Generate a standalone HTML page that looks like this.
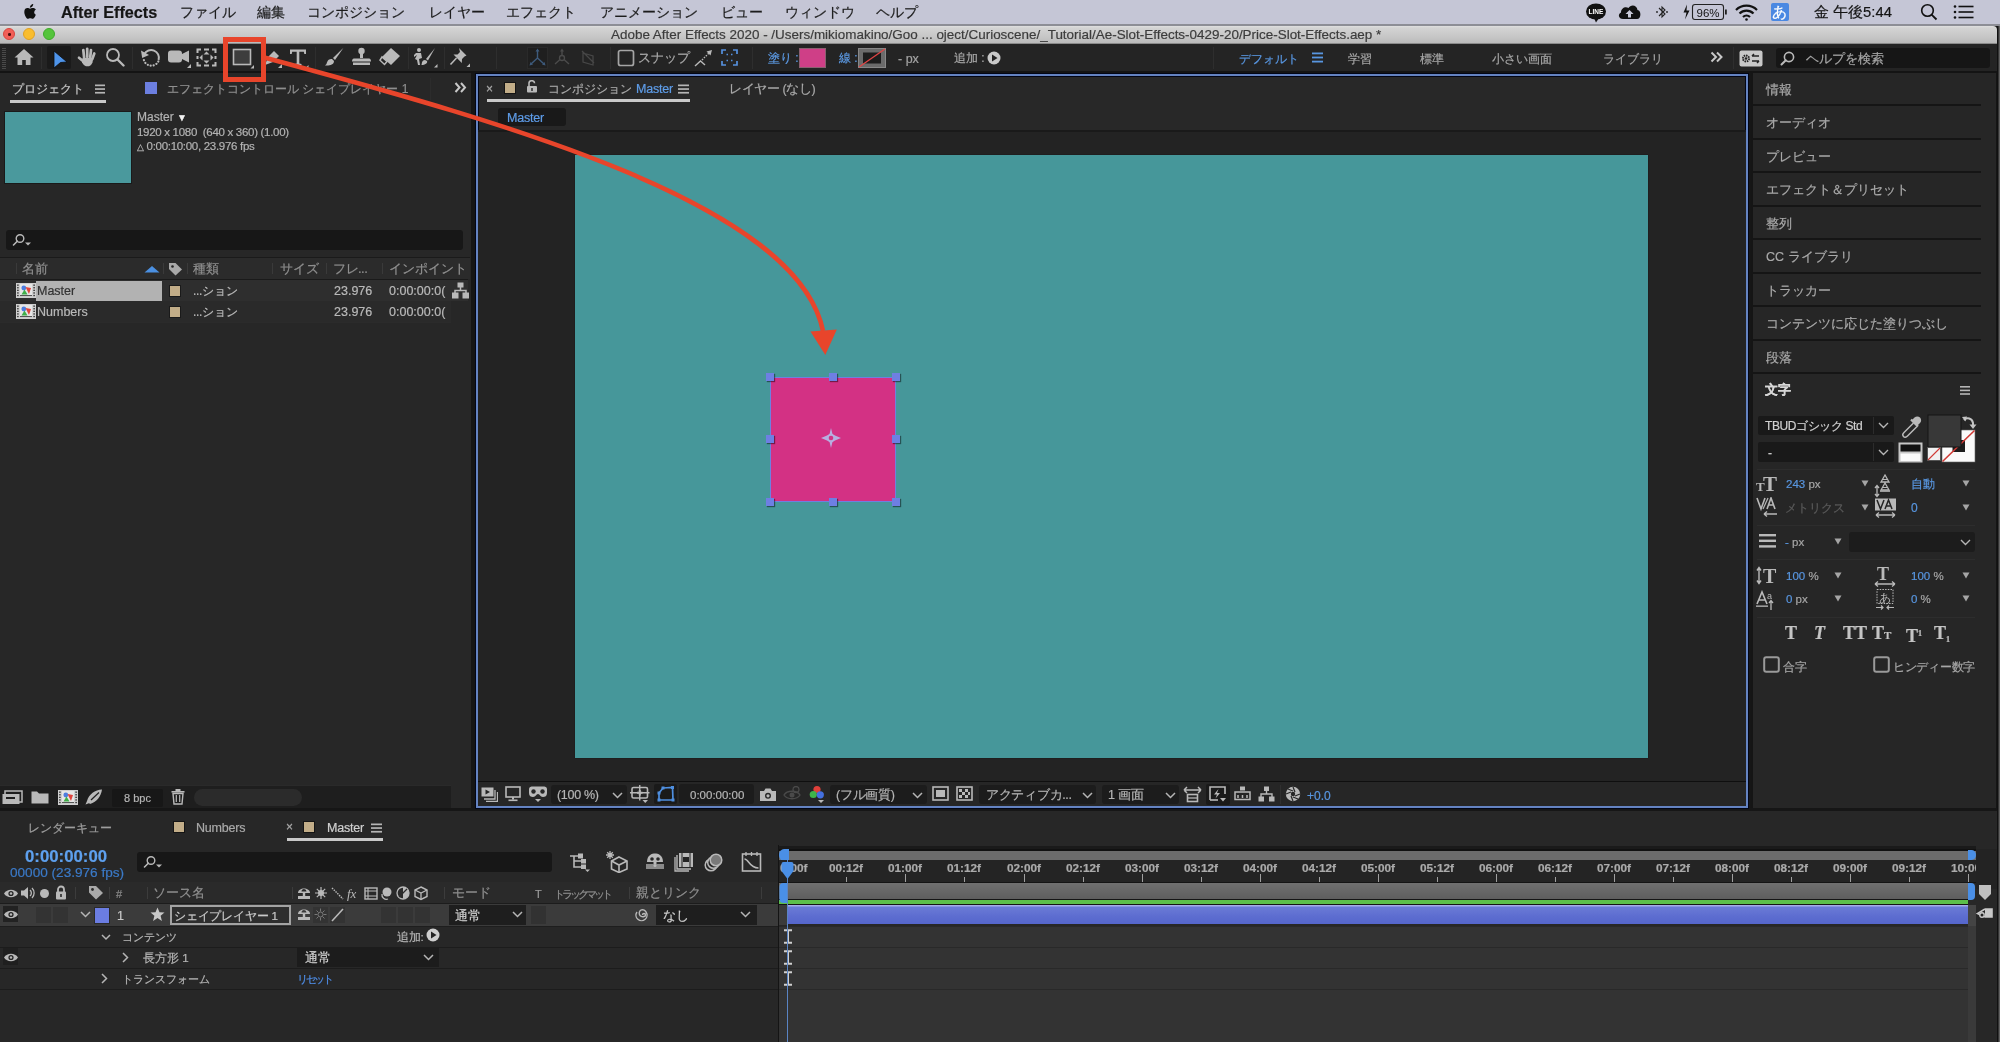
<!DOCTYPE html><html><head><meta charset="utf-8"><style>
html,body{margin:0;padding:0;width:2000px;height:1042px;overflow:hidden;background:#161616;font-family:'Liberation Sans', sans-serif;}
body{position:relative;}
div{box-sizing:border-box;-webkit-text-stroke:0.2px currentColor;}
#root{position:absolute;left:0;top:0;width:2000px;height:1042px;will-change:transform;}
</style></head><body><div id="root">
<div style="position:absolute;left:0px;top:0px;width:2000px;height:24px;background:#c5c6d6;"></div>
<div style="position:absolute;left:0px;top:24px;width:2000px;height:2px;background:#8d8e96;"></div>
<svg style="position:absolute;left:23px;top:3px;" width="16" height="18" viewBox="0 0 16 18"><path d="M11.2 9.6c0-2 1.6-2.9 1.7-3-0.9-1.4-2.4-1.6-2.9-1.6-1.2-0.1-2.4 0.7-3 0.7-0.6 0-1.6-0.7-2.6-0.7C3 5 1.3 6 1.3 8.9c0 2.9 2.2 6.9 3.6 6.9 0.7 0 1.4-0.6 2.4-0.6 1 0 1.5 0.6 2.4 0.6 1.4 0 2.8-3 3.1-4.1-1.7-0.7-1.6-2.2-1.6-2.1zM9.3 3.6c0.6-0.7 1-1.7 0.9-2.6-0.9 0-1.8 0.6-2.4 1.3-0.5 0.6-1 1.6-0.9 2.5 0.9 0.1 1.8-0.5 2.4-1.2z" fill="#111"/></svg>
<div style="position:absolute;left:61px;top:4px;font-size:16.2px;line-height:17px;color:#151515;font-weight:bold;white-space:nowrap;">After Effects</div>
<div style="position:absolute;left:180px;top:4px;font-size:14px;line-height:17px;color:#1c1c1c;font-weight:normal;white-space:nowrap;">ファイル</div>
<div style="position:absolute;left:257px;top:4px;font-size:14px;line-height:17px;color:#1c1c1c;font-weight:normal;white-space:nowrap;">編集</div>
<div style="position:absolute;left:307px;top:4px;font-size:14px;line-height:17px;color:#1c1c1c;font-weight:normal;white-space:nowrap;">コンポジション</div>
<div style="position:absolute;left:429px;top:4px;font-size:14px;line-height:17px;color:#1c1c1c;font-weight:normal;white-space:nowrap;">レイヤー</div>
<div style="position:absolute;left:506px;top:4px;font-size:14px;line-height:17px;color:#1c1c1c;font-weight:normal;white-space:nowrap;">エフェクト</div>
<div style="position:absolute;left:600px;top:4px;font-size:14px;line-height:17px;color:#1c1c1c;font-weight:normal;white-space:nowrap;">アニメーション</div>
<div style="position:absolute;left:721px;top:4px;font-size:14px;line-height:17px;color:#1c1c1c;font-weight:normal;white-space:nowrap;">ビュー</div>
<div style="position:absolute;left:785px;top:4px;font-size:14px;line-height:17px;color:#1c1c1c;font-weight:normal;white-space:nowrap;">ウィンドウ</div>
<div style="position:absolute;left:876px;top:4px;font-size:14px;line-height:17px;color:#1c1c1c;font-weight:normal;white-space:nowrap;">ヘルプ</div>
<svg style="position:absolute;left:1585px;top:3px;" width="23" height="20" viewBox="0 0 23 20"><ellipse cx="11" cy="8.5" rx="10" ry="8" fill="#111"/><path d="M9 15 L11 19.5 L14 15Z" fill="#111"/><text x="11" y="11" font-size="6.5" font-weight="bold" fill="#fff" text-anchor="middle" font-family="Liberation Sans">LINE</text></svg>
<svg style="position:absolute;left:1617px;top:3px;" width="25" height="18" viewBox="0 0 25 18"><path d="M6 16 C1.5 16 0.5 11 4 9.5 C4 5 8.5 3 11.5 5 C13.5 1 20 1.5 20.5 7 C24.5 7.5 24.5 16 20 16Z" fill="#111"/><path d="M12.5 7 L8.5 11 H11 V14.5 H14 V11 H16.5Z" fill="#c8c9d7"/></svg>
<svg style="position:absolute;left:1655px;top:4px;" width="14" height="16" viewBox="0 0 14 16"><path d="M4 4 L10 10 L7 13 V3 L10 6 L4 12" stroke="#222" stroke-width="1.1" fill="none"/><circle cx="2" cy="8" r="0.9" fill="#222"/><circle cx="12" cy="8" r="0.9" fill="#222"/></svg>
<svg style="position:absolute;left:1682px;top:3px;" width="46" height="18" viewBox="0 0 46 18"><path d="M5 1.5 L1.5 9.5 H4.5 L3 16.5 L7.5 7.5 H4.5Z" fill="#111"/><rect x="10.5" y="1.5" width="31" height="15" rx="2.5" fill="none" stroke="#222" stroke-width="1.1"/><rect x="43" y="6.5" width="1.8" height="5" fill="#222"/><text x="26" y="13.5" font-size="11.5" fill="#111" text-anchor="middle" font-family="Liberation Sans">96%</text></svg>
<svg style="position:absolute;left:1734px;top:3px;" width="25" height="18" viewBox="0 0 25 18"><path d="M2 7 A15 15 0 0 1 23 7" stroke="#111" stroke-width="2.2" fill="none"/><path d="M5.5 10.5 A10 10 0 0 1 19.5 10.5" stroke="#111" stroke-width="2.2" fill="none"/><path d="M9 14 A5 5 0 0 1 16 14" stroke="#111" stroke-width="2.2" fill="none"/><circle cx="12.5" cy="16.5" r="1.3" fill="#111"/></svg>
<div style="position:absolute;left:1771px;top:3px;width:18px;height:18px;background:#4a88e2;border-radius:2px;"></div>
<div style="position:absolute;left:1772px;top:4px;font-size:15px;line-height:16px;color:#fff;font-weight:normal;white-space:nowrap;">あ</div>
<div style="position:absolute;left:1814px;top:4px;font-size:14.8px;line-height:17px;color:#151515;font-weight:normal;white-space:nowrap;">金 午後5:44</div>
<svg style="position:absolute;left:1920px;top:3px;" width="19" height="18" viewBox="0 0 19 18"><circle cx="7.5" cy="7.5" r="5.8" stroke="#111" stroke-width="1.6" fill="none"/><path d="M11.6 11.6 L16.5 16.5" stroke="#111" stroke-width="1.8"/></svg>
<svg style="position:absolute;left:1953px;top:4px;" width="22" height="16" viewBox="0 0 22 16"><circle cx="2" cy="2.5" r="1.3" fill="#111"/><circle cx="2" cy="8" r="1.3" fill="#111"/><circle cx="2" cy="13.5" r="1.3" fill="#111"/><rect x="5.5" y="1.7" width="15" height="1.6" fill="#111"/><rect x="5.5" y="7.2" width="15" height="1.6" fill="#111"/><rect x="5.5" y="12.7" width="15" height="1.6" fill="#111"/></svg>
<div style="position:absolute;left:1997px;top:26px;width:3px;height:1016px;background:linear-gradient(90deg,#111 0,#111 1px,#5a5a5a 2px,#6a6a6a);"></div>
<div style="position:absolute;left:0px;top:26px;width:1997px;height:18px;background:linear-gradient(#e0e0e0 0,#d3d3d3 2px,#c6c6c6 60%,#b9b9b9);border-top-right-radius:4px;"></div>
<div style="position:absolute;left:0px;top:43px;width:1997px;height:1px;background:#8a8a8a;"></div>
<div style="position:absolute;left:3px;top:28px;width:12px;height:12px;background:#f25f57;border-radius:50%;border:0.5px solid #d8463f;"></div>
<div style="position:absolute;left:23px;top:28px;width:12px;height:12px;background:#f9bd2f;border-radius:50%;border:0.5px solid #dfa023;"></div>
<div style="position:absolute;left:43px;top:28px;width:12px;height:12px;background:#55c43c;border-radius:50%;border:0.5px solid #3eaa2a;"></div>
<div style="position:absolute;left:8px;top:33px;width:2.5px;height:2.5px;background:#4a0f0c;border-radius:50%;"></div>
<div style="position:absolute;left:611px;top:27px;font-size:13.45px;line-height:15px;color:#3c3c3c;font-weight:normal;white-space:nowrap;">Adobe After Effects 2020 - /Users/mikiomakino/Goo ... oject/Curioscene/_Tutorial/Ae-Slot-Effects-0429-20/Price-Slot-Effects.aep *</div>
<div style="position:absolute;left:0px;top:44px;width:1997px;height:28px;background:#242424;"></div>
<div style="position:absolute;left:0px;top:71px;width:1997px;height:2px;background:#141414;"></div>
<div style="position:absolute;left:2px;top:48px;width:4px;height:1px;background:#4a4a4a;"></div>
<div style="position:absolute;left:2px;top:50px;width:4px;height:1px;background:#4a4a4a;"></div>
<div style="position:absolute;left:2px;top:52px;width:4px;height:1px;background:#4a4a4a;"></div>
<div style="position:absolute;left:2px;top:54px;width:4px;height:1px;background:#4a4a4a;"></div>
<div style="position:absolute;left:2px;top:56px;width:4px;height:1px;background:#4a4a4a;"></div>
<div style="position:absolute;left:2px;top:58px;width:4px;height:1px;background:#4a4a4a;"></div>
<div style="position:absolute;left:2px;top:60px;width:4px;height:1px;background:#4a4a4a;"></div>
<div style="position:absolute;left:2px;top:62px;width:4px;height:1px;background:#4a4a4a;"></div>
<div style="position:absolute;left:2px;top:64px;width:4px;height:1px;background:#4a4a4a;"></div>
<div style="position:absolute;left:2px;top:66px;width:4px;height:1px;background:#4a4a4a;"></div>
<div style="position:absolute;left:2px;top:68px;width:4px;height:1px;background:#4a4a4a;"></div>
<div style="position:absolute;left:41px;top:47px;width:1px;height:22px;background:#2e2e2e;"></div>
<div style="position:absolute;left:132px;top:47px;width:1px;height:22px;background:#2e2e2e;"></div>
<div style="position:absolute;left:315px;top:47px;width:1px;height:22px;background:#2e2e2e;"></div>
<div style="position:absolute;left:408px;top:47px;width:1px;height:22px;background:#2e2e2e;"></div>
<div style="position:absolute;left:444px;top:47px;width:1px;height:22px;background:#2e2e2e;"></div>
<div style="position:absolute;left:496px;top:47px;width:1px;height:22px;background:#2e2e2e;"></div>
<div style="position:absolute;left:610px;top:47px;width:1px;height:22px;background:#2e2e2e;"></div>
<div style="position:absolute;left:752px;top:47px;width:1px;height:22px;background:#2e2e2e;"></div>
<div style="position:absolute;left:1213px;top:47px;width:1px;height:22px;background:#2e2e2e;"></div>
<div style="position:absolute;left:1733px;top:47px;width:1px;height:22px;background:#2e2e2e;"></div>
<svg style="position:absolute;left:14px;top:48px;" width="20" height="18" viewBox="0 0 20 18"><path d="M10 1 L19.5 9.5 H16.5 V17 H11.8 V12 H8.2 V17 H3.5 V9.5 H0.5Z" fill="#b9b9b9"/></svg>
<div style="position:absolute;left:47px;top:46px;width:24px;height:23px;background:#1a1a1a;border-radius:2px;"></div>
<svg style="position:absolute;left:53px;top:50px;" width="15" height="19" viewBox="0 0 15 19"><path d="M1 1 L14 12 L7.5 12.5 L1 18Z" fill="#4e94ea" stroke="#0d0d0d" stroke-width="0.8"/></svg>
<svg style="position:absolute;left:77px;top:47px;" width="20" height="20" viewBox="0 0 20 20"><g stroke="#b9b9b9" stroke-width="2.7" stroke-linecap="round"><path d="M7.2 11 L6.3 3"/><path d="M10.3 10 L10.2 1.8"/><path d="M13.2 10.5 L14 3"/><path d="M15.3 12 L17.3 6.5"/><path d="M6.5 14.5 L2 10.8"/></g><path d="M5.5 11 H16.2 L15.5 15.5 C14.5 18.5 12.5 19.3 10.5 19.3 C8.5 19.3 6.5 18.5 5 15.5 Z" fill="#b9b9b9"/></svg>
<svg style="position:absolute;left:105px;top:47px;" width="20" height="20" viewBox="0 0 20 20"><circle cx="8" cy="8" r="6" stroke="#b9b9b9" stroke-width="1.8" fill="none"/><path d="M12.5 12.5 L18.5 18.5" stroke="#b9b9b9" stroke-width="2.4" stroke-linecap="round"/></svg>
<svg style="position:absolute;left:140px;top:47px;" width="21" height="20" viewBox="0 0 21 20"><path d="M4.2 7.2 A7.8 7.8 0 0 1 18.6 13" stroke="#b9b9b9" stroke-width="2" fill="none"/><path d="M18.3 14.5 A7.8 7.8 0 0 1 3.6 11.5" stroke="#b9b9b9" stroke-width="2.2" fill="none" stroke-dasharray="0.1 2.9" stroke-linecap="round"/><path d="M1 3.5 L2.2 11 L9 8Z" fill="#b9b9b9"/></svg>
<svg style="position:absolute;left:167px;top:49px;" width="25" height="20" viewBox="0 0 25 20"><rect x="1" y="1.5" width="14" height="12" rx="3" fill="#b9b9b9"/><path d="M15 5 L22 1.5 V13.5 L15 10Z" fill="#b9b9b9"/><path d="M20 19 L24 15 V19Z" fill="#b9b9b9"/></svg>
<svg style="position:absolute;left:196px;top:48px;" width="21" height="19" viewBox="0 0 21 19"><path d="M1.5 5 V1.5 H5 M16 1.5 H19.5 V5 M19.5 14 V17.5 H16 M5 17.5 H1.5 V14" stroke="#b9b9b9" stroke-width="2" fill="none"/><path d="M8 1.5 H13 M8 17.5 H13 M1.5 8 V11 M19.5 8 V11" stroke="#b9b9b9" stroke-width="2"/><path d="M10.5 3.5 L7.5 6.5 H13.5Z M10.5 15.5 L7.5 12.5 H13.5Z M3.5 9.5 L6.5 6.5 V12.5Z M17.5 9.5 L14.5 6.5 V12.5Z" fill="#b9b9b9"/></svg>
<svg style="position:absolute;left:232px;top:48px;" width="23" height="21" viewBox="0 0 23 21"><rect x="1.5" y="1.5" width="17" height="15" fill="#3d3d3d" stroke="#b9b9b9" stroke-width="1.6"/><path d="M22 17 L22 20.5 L18.5 20.5Z" fill="#b9b9b9"/></svg>
<svg style="position:absolute;left:263px;top:48px;" width="20" height="20" viewBox="0 0 20 20"><path d="M2 17 L5 9 L11 3 L16 8 L10 14Z" fill="#b9b9b9"/><path d="M15 20 L19 16 V20Z" fill="#b9b9b9"/></svg>
<svg style="position:absolute;left:289px;top:48px;" width="20" height="20" viewBox="0 0 20 20"><path d="M1 1.5 H17 V6 H15.3 L14.8 3.8 H10.3 V15.5 L12.5 16 V17.5 H5.5 V16 L7.7 15.5 V3.8 H3.2 L2.7 6 H1Z" fill="#b9b9b9"/><path d="M17 19.5 L19.5 17 V19.5Z" fill="#b9b9b9"/></svg>
<svg style="position:absolute;left:324px;top:47px;" width="21" height="20" viewBox="0 0 21 20"><path d="M19.5 0.8 L9 11 L11 13 Z" fill="#b9b9b9"/><path d="M8 12 C4 11.5 3 15 2.5 17 L1 18.5 C5 19 10 18 10 14Z" fill="#b9b9b9"/></svg>
<svg style="position:absolute;left:351px;top:47px;" width="21" height="20" viewBox="0 0 21 20"><circle cx="10.5" cy="4" r="3.2" fill="#b9b9b9"/><rect x="9" y="6" width="3" height="5" fill="#b9b9b9"/><path d="M3 11.5 H18 C19.5 11.5 20 13 20 14.5 H1 C1 13 1.5 11.5 3 11.5Z" fill="#b9b9b9"/><rect x="2" y="15.5" width="17" height="2.5" fill="#b9b9b9"/></svg>
<svg style="position:absolute;left:379px;top:47px;" width="22" height="20" viewBox="0 0 22 20"><path d="M12 1 L21 9 L12 18 L3 10 Z" fill="#b9b9b9"/><path d="M3 10 L8 14.5 L5.5 17.5 L1 13.2Z" fill="none" stroke="#b9b9b9" stroke-width="1.5"/></svg>
<svg style="position:absolute;left:413px;top:47px;" width="26" height="22" viewBox="0 0 26 22"><circle cx="6" cy="3" r="2" fill="#b9b9b9"/><path d="M3 6 H8 L9 11 L6 12 L7 18 H5 L4 13 L2 12 L4 8 L1 10 V8Z" fill="#b9b9b9"/><path d="M22 1 L13 12 L15 13.5Z" fill="#b9b9b9"/><path d="M12 13 C9 13 9 16 8.5 18 C12 18 15 16 14 14Z" fill="#b9b9b9"/><path d="M21 20.5 L24.5 17 V20.5Z" fill="#b9b9b9"/></svg>
<svg style="position:absolute;left:449px;top:47px;" width="22" height="22" viewBox="0 0 22 22"><path d="M10 1 L17.5 8.5 L15.5 9.5 L13 12 L12.8 16 L4.5 7.5 L8.5 7.5 L11 5 Z" fill="#b9b9b9"/><path d="M7.5 11 L1.5 17.5" stroke="#b9b9b9" stroke-width="1.6"/><path d="M17.5 20 L21 16.5 V20Z" fill="#b9b9b9"/></svg>
<div style="position:absolute;left:527px;top:47px;width:21px;height:22px;background:#1f1f1f;border:1px solid #2a2a2a;"></div>
<svg style="position:absolute;left:528px;top:48px;" width="19" height="20" viewBox="0 0 19 20"><path d="M9.5 2 V10 L3 16 M9.5 10 L16 16" stroke="#3e5b7c" stroke-width="1.4" fill="none"/><path d="M9.5 0.5 L7.5 3.5 H11.5Z M1.5 17.5 L2.5 14 L5 16.5Z M17.5 17.5 L14 16.5 L16.5 14Z" fill="#3e5b7c"/></svg>
<svg style="position:absolute;left:553px;top:48px;" width="18" height="20" viewBox="0 0 18 20"><circle cx="9" cy="10" r="2.5" stroke="#4b4b4b" stroke-width="1.3" fill="none"/><path d="M9 2 V7.5 M7 11.5 L2 16 M11 11.5 L16 16" stroke="#4b4b4b" stroke-width="1.4"/><path d="M9 0.5 L7 3.5 H11Z" fill="#4b4b4b"/></svg>
<svg style="position:absolute;left:579px;top:48px;" width="18" height="20" viewBox="0 0 18 20"><path d="M3 3 L15 15 M4 5 L4 14 L14 17 V8 Z" stroke="#474747" stroke-width="1.3" fill="none"/></svg>
<svg style="position:absolute;left:617px;top:49px;" width="18" height="18" viewBox="0 0 18 18"><rect x="1.5" y="1.5" width="15" height="15" rx="2" fill="none" stroke="#a5a5a5" stroke-width="1.7"/></svg>
<div style="position:absolute;left:638px;top:51px;font-size:12.5px;line-height:14px;color:#a9a9a9;font-weight:normal;white-space:nowrap;">スナップ</div>
<svg style="position:absolute;left:694px;top:49px;" width="19" height="19" viewBox="0 0 19 19"><path d="M1 17 L6.5 12 L11 16" stroke="#b9b9b9" stroke-width="1.4" fill="none"/><path d="M8 11 L17 2" stroke="#b9b9b9" stroke-width="1.4" stroke-dasharray="1.5 1.2"/><path d="M18 1 L12.5 2.5 L16.5 6.5Z" fill="#b9b9b9"/></svg>
<svg style="position:absolute;left:721px;top:49px;" width="17" height="17" viewBox="0 0 17 17"><path d="M1 5 V1 H5 M12 1 H16 V5 M16 12 V16 H12 M5 16 H1 V12" stroke="#5590dd" stroke-width="1.7" fill="none"/><path d="M5.5 5.5 h1.5 M10 5.5 h1.5 M5.5 11.5 h1.5 M10 11.5 h1.5" stroke="#5590dd" stroke-width="1.5"/></svg>
<div style="position:absolute;left:768px;top:51px;font-size:12px;line-height:14px;color:#5c9ae4;font-weight:normal;white-space:nowrap;">塗り :</div>
<div style="position:absolute;left:799px;top:48px;width:27px;height:20px;background:#cf3f87;border:1px solid #8a6070;"></div>
<div style="position:absolute;left:839px;top:51px;font-size:12px;line-height:14px;color:#5c9ae4;font-weight:normal;white-space:nowrap;">線 :</div>
<svg style="position:absolute;left:858px;top:48px;" width="28" height="20" viewBox="0 0 28 20"><rect x="0.5" y="0.5" width="27" height="19" fill="#6b6b6b" stroke="#888"/><rect x="5" y="4.5" width="18" height="11" fill="#1d1d1d"/><path d="M1 19 L27 1" stroke="#e04545" stroke-width="1.3"/></svg>
<div style="position:absolute;left:898px;top:52px;font-size:12.5px;line-height:14px;color:#a3a3a3;font-weight:normal;white-space:nowrap;">- px</div>
<div style="position:absolute;left:954px;top:51px;font-size:12px;line-height:14px;color:#a9a9a9;font-weight:normal;white-space:nowrap;">追加 :</div>
<svg style="position:absolute;left:987px;top:51px;" width="14" height="14" viewBox="0 0 14 14"><circle cx="7" cy="7" r="6.5" fill="#c9c9c9"/><path d="M5 3.5 L10.5 7 L5 10.5Z" fill="#222"/></svg>
<div style="position:absolute;left:1239px;top:52px;font-size:12px;line-height:14px;color:#5896e0;font-weight:normal;white-space:nowrap;">デフォルト</div>
<svg style="position:absolute;left:1312px;top:52px;" width="12" height="11" viewBox="0 0 12 11"><rect x="0" y="0.5" width="11" height="1.8" fill="#5896e0"/><rect x="0" y="4.6" width="11" height="1.8" fill="#5896e0"/><rect x="0" y="8.7" width="11" height="1.8" fill="#5896e0"/></svg>
<div style="position:absolute;left:1348px;top:52px;font-size:12px;line-height:14px;color:#a6a6a6;font-weight:normal;white-space:nowrap;">学習</div>
<div style="position:absolute;left:1420px;top:52px;font-size:12px;line-height:14px;color:#a6a6a6;font-weight:normal;white-space:nowrap;">標準</div>
<div style="position:absolute;left:1492px;top:52px;font-size:12px;line-height:14px;color:#a6a6a6;font-weight:normal;white-space:nowrap;">小さい画面</div>
<div style="position:absolute;left:1603px;top:52px;font-size:12px;line-height:14px;color:#a6a6a6;font-weight:normal;white-space:nowrap;">ライブラリ</div>
<svg style="position:absolute;left:1710px;top:51px;" width="14" height="12" viewBox="0 0 14 12"><path d="M1.5 1.5 L6 6 L1.5 10.5 M7 1.5 L11.5 6 L7 10.5" stroke="#c8c8c8" stroke-width="2" fill="none"/></svg>
<svg style="position:absolute;left:1739px;top:50px;" width="24" height="17" viewBox="0 0 24 17"><rect x="0.5" y="0.5" width="23" height="16" rx="2" fill="#c8c8c8"/><circle cx="7" cy="8.5" r="3" fill="none" stroke="#222" stroke-width="2" stroke-dasharray="1.5 0.8"/><circle cx="7" cy="8.5" r="1.3" fill="#222"/><path d="M13 6 H20 M13 6 L15 4 M20 11 H13 M20 11 L18 13" stroke="#222" stroke-width="1.5" fill="none"/></svg>
<div style="position:absolute;left:1776px;top:48px;width:214px;height:20px;background:#161616;border-radius:3px;"></div>
<svg style="position:absolute;left:1780px;top:51px;" width="15" height="15" viewBox="0 0 15 15"><circle cx="9" cy="6" r="4.6" stroke="#b9b9b9" stroke-width="1.6" fill="none"/><path d="M5.8 9.2 L1.5 13.5" stroke="#b9b9b9" stroke-width="2" stroke-linecap="round"/></svg>
<div style="position:absolute;left:1806px;top:52px;font-size:12.5px;line-height:14px;color:#a6a6a6;font-weight:normal;white-space:nowrap;">ヘルプを検索</div>
<div style="position:absolute;left:0px;top:73px;width:471px;height:735px;background:#272727;"></div>
<div style="position:absolute;left:12px;top:82px;font-size:12px;line-height:14px;color:#c4c4c4;font-weight:normal;white-space:nowrap;">プロジェクト</div>
<svg style="position:absolute;left:95px;top:84px;" width="10" height="10" viewBox="0 0 10 10"><rect x="0" y="0.5" width="10" height="1.7" fill="#b5b5b5"/><rect x="0" y="4.2" width="10" height="1.7" fill="#b5b5b5"/><rect x="0" y="7.9" width="10" height="1.7" fill="#b5b5b5"/></svg>
<div style="position:absolute;left:10px;top:100px;width:96px;height:3px;background:#c9c9c9;"></div>
<div style="position:absolute;left:145px;top:82px;width:12px;height:12px;background:#6c7fe0;"></div>
<div style="position:absolute;left:167px;top:82px;font-size:12px;line-height:14px;color:#8f8f8f;font-weight:normal;white-space:nowrap;">エフェクトコントロール シェイプレイヤー 1</div>
<div style="position:absolute;left:430px;top:78px;width:1px;height:22px;background:#2c2c2c;"></div>
<svg style="position:absolute;left:454px;top:82px;" width="13" height="11" viewBox="0 0 13 11"><path d="M1.5 1 L5.5 5.5 L1.5 10 M7 1 L11 5.5 L7 10" stroke="#c8c8c8" stroke-width="2" fill="none"/></svg>
<div style="position:absolute;left:4px;top:111px;width:128px;height:73px;background:#4a999d;border:1px solid #1a1a1a;"></div>
<div style="position:absolute;left:137px;top:111px;font-size:12px;line-height:13px;color:#b3b3b3;font-weight:normal;white-space:nowrap;">Master <span style="color:#f2f2f2;font-size:10px">▼</span></div>
<div style="position:absolute;left:137px;top:126px;font-size:11.5px;line-height:13px;color:#b3b3b3;font-weight:normal;white-space:nowrap;letter-spacing:-0.3px;">1920 x 1080&nbsp; (640 x 360) (1.00)</div>
<div style="position:absolute;left:137px;top:140px;font-size:11.5px;line-height:13px;color:#b3b3b3;font-weight:normal;white-space:nowrap;letter-spacing:-0.3px;"><span style="font-size:9px">△</span> 0:00:10:00, 23.976 fps</div>
<div style="position:absolute;left:6px;top:230px;width:457px;height:20px;background:#171717;border-radius:3px;"></div>
<svg style="position:absolute;left:12px;top:233px;" width="22" height="15" viewBox="0 0 22 15"><circle cx="8" cy="5.5" r="3.8" stroke="#b9b9b9" stroke-width="1.4" fill="none"/><path d="M5.3 8.2 L1.5 12" stroke="#b9b9b9" stroke-width="1.6" stroke-linecap="round"/><path d="M13 9.5 H19 L16 12.5Z" fill="#b9b9b9"/></svg>
<div style="position:absolute;left:0px;top:257px;width:470px;height:1px;background:#1a1a1a;"></div>
<div style="position:absolute;left:0px;top:258px;width:470px;height:21px;background:#2b2b2b;"></div>
<div style="position:absolute;left:0px;top:279px;width:468px;height:1px;background:#1a1a1a;"></div>
<div style="position:absolute;left:16px;top:263px;width:1px;height:11px;background:#3a3a3a;"></div>
<div style="position:absolute;left:163px;top:263px;width:1px;height:11px;background:#3a3a3a;"></div>
<div style="position:absolute;left:187px;top:263px;width:1px;height:11px;background:#3a3a3a;"></div>
<div style="position:absolute;left:272px;top:263px;width:1px;height:11px;background:#3a3a3a;"></div>
<div style="position:absolute;left:326px;top:263px;width:1px;height:11px;background:#3a3a3a;"></div>
<div style="position:absolute;left:382px;top:263px;width:1px;height:11px;background:#3a3a3a;"></div>
<div style="position:absolute;left:22px;top:262px;font-size:13px;line-height:14px;color:#8f8f8f;font-weight:normal;white-space:nowrap;">名前</div>
<svg style="position:absolute;left:144px;top:265px;" width="16" height="8" viewBox="0 0 16 8"><path d="M0.5 7.5 L8 1 L15.5 7.5Z" fill="#4b90e2"/></svg>
<svg style="position:absolute;left:168px;top:262px;" width="15" height="14" viewBox="0 0 15 14"><path d="M1 1 H7.5 L14 7.5 L7.5 13.5 L1 7V1Z" fill="#a9a9a9"/><circle cx="4.5" cy="4.5" r="1.3" fill="#232323"/></svg>
<div style="position:absolute;left:193px;top:262px;font-size:13px;line-height:14px;color:#8f8f8f;font-weight:normal;white-space:nowrap;">種類</div>
<div style="position:absolute;left:280px;top:262px;font-size:13px;line-height:14px;color:#8f8f8f;font-weight:normal;white-space:nowrap;">サイズ</div>
<div style="position:absolute;left:333px;top:262px;font-size:13px;line-height:14px;color:#8f8f8f;font-weight:normal;white-space:nowrap;letter-spacing:-0.5px;">フレ...</div>
<div style="position:absolute;left:389px;top:262px;font-size:12.8px;line-height:14px;color:#8f8f8f;font-weight:normal;white-space:nowrap;">インポイント</div>
<div style="position:absolute;left:0px;top:280px;width:468px;height:21px;background:#2e2e2e;"></div>
<div style="position:absolute;left:0px;top:301px;width:451px;height:21px;background:#2a2a2a;"></div>
<div style="position:absolute;left:0px;top:322px;width:451px;height:1px;background:#2b2b2b;"></div>
<svg style="position:absolute;left:16px;top:283px;" width="20" height="15" viewBox="0 0 20 15"><rect x="0" y="0" width="20" height="15" fill="#cfcfcf"/><rect x="1.2" y="1.5" width="1.4" height="1.3" fill="#222"/><rect x="17.4" y="1.5" width="1.4" height="1.3" fill="#222"/><rect x="1.2" y="4.1" width="1.4" height="1.3" fill="#222"/><rect x="17.4" y="4.1" width="1.4" height="1.3" fill="#222"/><rect x="1.2" y="6.7" width="1.4" height="1.3" fill="#222"/><rect x="17.4" y="6.7" width="1.4" height="1.3" fill="#222"/><rect x="1.2" y="9.3" width="1.4" height="1.3" fill="#222"/><rect x="17.4" y="9.3" width="1.4" height="1.3" fill="#222"/><rect x="1.2" y="11.9" width="1.4" height="1.3" fill="#222"/><rect x="17.4" y="11.9" width="1.4" height="1.3" fill="#222"/><rect x="4" y="1" width="12" height="13" fill="#e6e6e6"/><rect x="4" y="12" width="12" height="1.2" fill="#555"/><circle cx="7.8" cy="5" r="2.4" fill="#4d7de0"/><path d="M5.5 11.5 L8.5 6.5 L11.5 11.5Z" fill="#3fae49"/><path d="M9.5 4 L15 5 L13 11 Z" fill="#e0443d"/></svg>
<div style="position:absolute;left:36px;top:281px;width:126px;height:20px;background:#b2b2b2;"></div>
<div style="position:absolute;left:37px;top:284px;font-size:12.5px;line-height:14px;color:#333333;font-weight:normal;white-space:nowrap;">Master</div>
<div style="position:absolute;left:169px;top:285px;width:12px;height:12px;background:#c2ad88;border:1px solid #1a1a1a;"></div>
<div style="position:absolute;left:193px;top:284px;font-size:12px;line-height:14px;color:#b9b9b9;font-weight:normal;white-space:nowrap;letter-spacing:-0.3px;">...ション</div>
<div style="position:absolute;left:334px;top:284px;font-size:12.5px;line-height:14px;color:#b9b9b9;font-weight:normal;white-space:nowrap;">23.976</div>
<div style="position:absolute;left:389px;top:284px;font-size:12.5px;line-height:14px;color:#b9b9b9;font-weight:normal;white-space:nowrap;width:63px;overflow:hidden;">0:00:00:0(</div>
<svg style="position:absolute;left:452px;top:282px;" width="17" height="17" viewBox="0 0 17 17"><rect x="5.5" y="0.5" width="6" height="5" fill="#b9b9b9"/><path d="M8.5 5 V8.5 M3 11 V8.5 H14 V11" stroke="#b9b9b9" stroke-width="1.5" fill="none"/><rect x="0" y="10.5" width="6.5" height="6" fill="#b9b9b9"/><rect x="10.5" y="10.5" width="6.5" height="6" fill="#b9b9b9"/></svg>
<svg style="position:absolute;left:16px;top:304px;" width="20" height="15" viewBox="0 0 20 15"><rect x="0" y="0" width="20" height="15" fill="#cfcfcf"/><rect x="1.2" y="1.5" width="1.4" height="1.3" fill="#222"/><rect x="17.4" y="1.5" width="1.4" height="1.3" fill="#222"/><rect x="1.2" y="4.1" width="1.4" height="1.3" fill="#222"/><rect x="17.4" y="4.1" width="1.4" height="1.3" fill="#222"/><rect x="1.2" y="6.7" width="1.4" height="1.3" fill="#222"/><rect x="17.4" y="6.7" width="1.4" height="1.3" fill="#222"/><rect x="1.2" y="9.3" width="1.4" height="1.3" fill="#222"/><rect x="17.4" y="9.3" width="1.4" height="1.3" fill="#222"/><rect x="1.2" y="11.9" width="1.4" height="1.3" fill="#222"/><rect x="17.4" y="11.9" width="1.4" height="1.3" fill="#222"/><rect x="4" y="1" width="12" height="13" fill="#e6e6e6"/><rect x="4" y="12" width="12" height="1.2" fill="#555"/><circle cx="7.8" cy="5" r="2.4" fill="#4d7de0"/><path d="M5.5 11.5 L8.5 6.5 L11.5 11.5Z" fill="#3fae49"/><path d="M9.5 4 L15 5 L13 11 Z" fill="#e0443d"/></svg>
<div style="position:absolute;left:37px;top:305px;font-size:12.5px;line-height:14px;color:#b9b9b9;font-weight:normal;white-space:nowrap;">Numbers</div>
<div style="position:absolute;left:169px;top:306px;width:12px;height:12px;background:#c2ad88;border:1px solid #1a1a1a;"></div>
<div style="position:absolute;left:193px;top:305px;font-size:12px;line-height:14px;color:#b9b9b9;font-weight:normal;white-space:nowrap;letter-spacing:-0.3px;">...ション</div>
<div style="position:absolute;left:334px;top:305px;font-size:12.5px;line-height:14px;color:#b9b9b9;font-weight:normal;white-space:nowrap;">23.976</div>
<div style="position:absolute;left:389px;top:305px;font-size:12.5px;line-height:14px;color:#b9b9b9;font-weight:normal;white-space:nowrap;width:63px;overflow:hidden;">0:00:00:0(</div>
<div style="position:absolute;left:0px;top:786px;width:451px;height:22px;background:#1e1e1e;"></div>
<div style="position:absolute;left:0px;top:785px;width:451px;height:1px;background:#2a2a2a;"></div>
<svg style="position:absolute;left:2px;top:789px;" width="21" height="16" viewBox="0 0 21 16"><rect x="3" y="2" width="17" height="11" fill="none" stroke="#b9b9b9" stroke-width="1.5"/><rect x="0.5" y="5" width="17" height="10" fill="#b9b9b9"/><rect x="4" y="8" width="9" height="2" fill="#1e1e1e"/></svg>
<svg style="position:absolute;left:31px;top:790px;" width="18" height="14" viewBox="0 0 18 14"><path d="M0.5 1.5 H6 L8 3.5 H17.5 V13.5 H0.5Z" fill="#b9b9b9"/></svg>
<svg style="position:absolute;left:58px;top:790px;" width="20" height="15" viewBox="0 0 20 15"><rect x="0" y="0" width="20" height="15" fill="#cfcfcf"/><rect x="1.2" y="1.5" width="1.4" height="1.3" fill="#222"/><rect x="17.4" y="1.5" width="1.4" height="1.3" fill="#222"/><rect x="1.2" y="4.1" width="1.4" height="1.3" fill="#222"/><rect x="17.4" y="4.1" width="1.4" height="1.3" fill="#222"/><rect x="1.2" y="6.7" width="1.4" height="1.3" fill="#222"/><rect x="17.4" y="6.7" width="1.4" height="1.3" fill="#222"/><rect x="1.2" y="9.3" width="1.4" height="1.3" fill="#222"/><rect x="17.4" y="9.3" width="1.4" height="1.3" fill="#222"/><rect x="1.2" y="11.9" width="1.4" height="1.3" fill="#222"/><rect x="17.4" y="11.9" width="1.4" height="1.3" fill="#222"/><rect x="4" y="1" width="12" height="13" fill="#e6e6e6"/><rect x="4" y="12" width="12" height="1.2" fill="#555"/><circle cx="7.8" cy="5" r="2.4" fill="#4d7de0"/><path d="M5.5 11.5 L8.5 6.5 L11.5 11.5Z" fill="#3fae49"/><path d="M9.5 4 L15 5 L13 11 Z" fill="#e0443d"/></svg>
<svg style="position:absolute;left:85px;top:789px;" width="18" height="16" viewBox="0 0 18 16"><path d="M17 0.5 C10 1 4 5 2 12 L5 15 C12 13 16 7 17 0.5Z M2 12 L0.5 15.5 L4.5 14" fill="#b9b9b9"/><path d="M6 11 L14 3.5" stroke="#1e1e1e" stroke-width="1.2"/></svg>
<div style="position:absolute;left:112px;top:789px;width:51px;height:18px;background:#171717;border-radius:2px;"></div>
<div style="position:absolute;left:124px;top:792px;font-size:11px;line-height:13px;color:#b5b5b5;font-weight:normal;white-space:nowrap;">8 bpc</div>
<svg style="position:absolute;left:171px;top:789px;" width="14" height="16" viewBox="0 0 14 16"><rect x="0.5" y="2" width="13" height="1.6" fill="#b9b9b9"/><rect x="4.5" y="0" width="5" height="2" fill="#b9b9b9"/><path d="M2 4.5 H12 L11 15 H3Z" fill="none" stroke="#b9b9b9" stroke-width="1.4"/><path d="M5.3 6 V13 M8.7 6 V13" stroke="#b9b9b9" stroke-width="1.2"/></svg>
<div style="position:absolute;left:194px;top:789px;width:108px;height:17px;background:#2b2b2b;border-radius:9px;"></div>
<div style="position:absolute;left:475px;top:73px;width:1274px;height:736px;background:#020616;"></div>
<div style="position:absolute;left:476px;top:74px;width:1272px;height:734px;background:#282828;border:2px solid #6483c2;"></div>
<div style="position:absolute;left:478px;top:76px;width:1268px;height:730px;background:transparent;border:1px solid #020616;"></div>
<div style="position:absolute;left:486px;top:83px;font-size:12px;line-height:13px;color:#a9a9a9;font-weight:normal;white-space:nowrap;">×</div>
<div style="position:absolute;left:504px;top:82px;width:12px;height:12px;background:#c2ad88;border:1px solid #141414;"></div>
<svg style="position:absolute;left:526px;top:80px;" width="12" height="13" viewBox="0 0 12 13"><path d="M3 6 V3.8 A2.8 2.8 0 0 1 8.6 3.3" stroke="#b9b9b9" stroke-width="1.6" fill="none"/><rect x="1" y="6" width="10" height="6.5" rx="1" fill="#b9b9b9"/><rect x="5.3" y="8" width="1.4" height="3" fill="#232323"/></svg>
<div style="position:absolute;left:548px;top:82px;font-size:12px;line-height:14px;color:#a9a9a9;font-weight:normal;white-space:nowrap;">コンポジション</div>
<div style="position:absolute;left:636px;top:82px;font-size:12.5px;line-height:14px;color:#5e9ce8;font-weight:normal;white-space:nowrap;letter-spacing:-0.2px;">Master</div>
<svg style="position:absolute;left:678px;top:84px;" width="11" height="10" viewBox="0 0 11 10"><rect x="0" y="0.5" width="11" height="1.7" fill="#b5b5b5"/><rect x="0" y="4.2" width="11" height="1.7" fill="#b5b5b5"/><rect x="0" y="7.9" width="11" height="1.7" fill="#b5b5b5"/></svg>
<div style="position:absolute;left:487px;top:99px;width:203px;height:3px;background:#c9c9c9;"></div>
<div style="position:absolute;left:729px;top:82px;font-size:12.5px;line-height:14px;color:#a9a9a9;font-weight:normal;white-space:nowrap;letter-spacing:-0.4px;">レイヤー (なし)</div>
<div style="position:absolute;left:498px;top:108px;width:68px;height:18px;background:#191919;border-radius:3px;"></div>
<div style="position:absolute;left:507px;top:111px;font-size:12.5px;line-height:14px;color:#5e9ce8;font-weight:normal;white-space:nowrap;letter-spacing:-0.2px;">Master</div>
<div style="position:absolute;left:478px;top:130px;width:1268px;height:2px;background:#1a1a1a;"></div>
<div style="position:absolute;left:478px;top:132px;width:1268px;height:650px;background:#232323;"></div>
<div style="position:absolute;left:575px;top:155px;width:1073px;height:603px;background:#46979a;box-shadow:0 0 1px #111;"></div>
<div style="position:absolute;left:770px;top:377px;width:126px;height:125px;background:#d33184;border:1px solid #6f7fe0;"></div>
<div style="position:absolute;left:766px;top:373px;width:8px;height:8px;background:#6e7fe3;box-shadow:1px 1px 1px rgba(0,0,0,0.45);"></div>
<div style="position:absolute;left:766px;top:435px;width:8px;height:8px;background:#6e7fe3;box-shadow:1px 1px 1px rgba(0,0,0,0.45);"></div>
<div style="position:absolute;left:766px;top:498px;width:8px;height:8px;background:#6e7fe3;box-shadow:1px 1px 1px rgba(0,0,0,0.45);"></div>
<div style="position:absolute;left:829px;top:373px;width:8px;height:8px;background:#6e7fe3;box-shadow:1px 1px 1px rgba(0,0,0,0.45);"></div>
<div style="position:absolute;left:829px;top:498px;width:8px;height:8px;background:#6e7fe3;box-shadow:1px 1px 1px rgba(0,0,0,0.45);"></div>
<div style="position:absolute;left:892px;top:373px;width:8px;height:8px;background:#6e7fe3;box-shadow:1px 1px 1px rgba(0,0,0,0.45);"></div>
<div style="position:absolute;left:892px;top:435px;width:8px;height:8px;background:#6e7fe3;box-shadow:1px 1px 1px rgba(0,0,0,0.45);"></div>
<div style="position:absolute;left:892px;top:498px;width:8px;height:8px;background:#6e7fe3;box-shadow:1px 1px 1px rgba(0,0,0,0.45);"></div>
<svg style="position:absolute;left:819px;top:426px;" width="24" height="24" viewBox="0 0 24 24"><path d="M12 2 L13.6 8.5 L22 12 L13.6 15.5 L12 22 L10.4 15.5 L2 12 L10.4 8.5Z" fill="#b7aee0"/><circle cx="12" cy="12" r="4.2" fill="#b7aee0"/><circle cx="12" cy="12" r="2.3" fill="#d33184"/></svg>
<div style="position:absolute;left:478px;top:781px;width:1268px;height:1px;background:#0f0f0f;"></div>
<div style="position:absolute;left:478px;top:782px;width:1268px;height:24px;background:#262626;"></div>
<svg style="position:absolute;left:481px;top:787px;" width="17" height="15" viewBox="0 0 17 15"><rect x="0.5" y="0.5" width="12" height="9" fill="#b9b9b9"/><path d="M4.5 2.5 L9 5 L4.5 7.5Z" fill="#262626"/><path d="M14 3 V12 H3 M16.5 5 V14.5 H5" stroke="#b9b9b9" stroke-width="1.3" fill="none"/></svg>
<svg style="position:absolute;left:505px;top:786px;" width="16" height="16" viewBox="0 0 16 16"><rect x="1" y="1" width="14" height="10" fill="none" stroke="#b9b9b9" stroke-width="1.6"/><rect x="7" y="11" width="2" height="2.5" fill="#b9b9b9"/><rect x="3.5" y="13.5" width="9" height="1.6" fill="#b9b9b9"/></svg>
<svg style="position:absolute;left:528px;top:786px;" width="20" height="17" viewBox="0 0 20 17"><path d="M1 3 C1 0.8 3 0.5 5 0.5 H15 C17 0.5 19 0.8 19 3 V7 C19 10 17 11 15 11 C12 11 12 8 10 8 C8 8 8 11 5 11 C3 11 1 10 1 7Z" fill="#b9b9b9"/><circle cx="5.5" cy="5.5" r="2.2" fill="#262626"/><circle cx="14.5" cy="5.5" r="2.2" fill="#262626"/><path d="M7 13 H13 L10 16Z" fill="#b9b9b9"/></svg>
<div style="position:absolute;left:551px;top:785px;width:76px;height:19px;background:#1c1c1c;border-radius:3px;"></div>
<div style="position:absolute;left:557px;top:788px;font-size:12.5px;line-height:14px;color:#b5b5b5;font-weight:normal;white-space:nowrap;letter-spacing:-0.3px;">(100 %)</div>
<svg style="position:absolute;left:612px;top:792px;" width="11" height="7" viewBox="0 0 11 7"><path d="M1 1 L5.5 5.5 L10 1" stroke="#b5b5b5" stroke-width="1.5" fill="none"/></svg>
<svg style="position:absolute;left:630px;top:785px;" width="20" height="19" viewBox="0 0 20 19"><rect x="2" y="2.5" width="15.5" height="10.5" rx="1.5" fill="none" stroke="#b9b9b9" stroke-width="1.6"/><path d="M9.75 0 V15.5 M0 7.75 H19.5" stroke="#b9b9b9" stroke-width="1.4"/><path d="M7 7.75 H12.5 M9.75 5 V10.5" stroke="#b9b9b9" stroke-width="2"/><path d="M12.5 15 H18 L15.25 18Z" fill="#b9b9b9"/></svg>
<div style="position:absolute;left:654px;top:784px;width:23px;height:20px;background:#1a1a1a;border-radius:2px;"></div>
<svg style="position:absolute;left:657px;top:786px;" width="18" height="16" viewBox="0 0 18 16"><path d="M6 2 L15.5 1.5 L16 14 L2 14 L2 7Z" fill="none" stroke="#4f8fe0" stroke-width="1.7"/><rect x="4.5" y="0.5" width="3" height="3" fill="#4f8fe0"/><rect x="14" y="0" width="3" height="3" fill="#4f8fe0"/><rect x="14.5" y="12.5" width="3" height="3" fill="#4f8fe0"/><rect x="0.5" y="12.5" width="3" height="3" fill="#4f8fe0"/><rect x="0.5" y="5.5" width="3" height="3" fill="#4f8fe0"/></svg>
<div style="position:absolute;left:679px;top:784px;width:75px;height:20px;background:#1c1c1c;border-radius:3px;"></div>
<div style="position:absolute;left:690px;top:789px;font-size:11.5px;line-height:13px;color:#b5b5b5;font-weight:normal;white-space:nowrap;">0:00:00:00</div>
<svg style="position:absolute;left:759px;top:787px;" width="18" height="15" viewBox="0 0 18 15"><path d="M1 4 H5 L6.5 1.5 H11.5 L13 4 H17 V14 H1Z" fill="#b9b9b9"/><circle cx="9" cy="8.8" r="3" fill="#262626"/><circle cx="9" cy="8.8" r="1.6" fill="#b9b9b9"/></svg>
<svg style="position:absolute;left:783px;top:786px;" width="19" height="16" viewBox="0 0 19 16"><path d="M1 9 C4 4 14 4 17 9 C14 14 4 14 1 9Z" fill="none" stroke="#4a4a4a" stroke-width="1.4"/><circle cx="9" cy="9" r="2.5" fill="#4a4a4a"/><circle cx="13" cy="3.5" r="3" fill="none" stroke="#4a4a4a" stroke-width="1.3"/></svg>
<svg style="position:absolute;left:809px;top:785px;" width="16" height="19" viewBox="0 0 16 19"><circle cx="8" cy="4.5" r="3.6" fill="#e0403a"/><circle cx="4.3" cy="9.5" r="3.6" fill="#3fb54a"/><circle cx="11.3" cy="9.8" r="3.6" fill="#4470e0"/><path d="M9 15 H15 L12 18Z" fill="#b9b9b9"/></svg>
<div style="position:absolute;left:830px;top:785px;width:97px;height:19px;background:#1c1c1c;border-radius:3px;"></div>
<div style="position:absolute;left:836px;top:788px;font-size:12.5px;line-height:14px;color:#b5b5b5;font-weight:normal;white-space:nowrap;letter-spacing:-0.3px;">(フル画質)</div>
<svg style="position:absolute;left:912px;top:792px;" width="11" height="7" viewBox="0 0 11 7"><path d="M1 1 L5.5 5.5 L10 1" stroke="#b5b5b5" stroke-width="1.5" fill="none"/></svg>
<svg style="position:absolute;left:932px;top:786px;" width="17" height="16" viewBox="0 0 17 16"><rect x="1" y="1" width="15" height="13" fill="none" stroke="#b9b9b9" stroke-width="1.6"/><rect x="4" y="4" width="9" height="7" fill="#b9b9b9"/></svg>
<svg style="position:absolute;left:956px;top:786px;" width="17" height="16" viewBox="0 0 17 16"><rect x="1" y="1" width="15" height="13" fill="none" stroke="#b9b9b9" stroke-width="1.6"/><path d="M3 3 h3 v3 h-3z M9 3 h3 v3 h-3z M6 6 h3 v3 h-3z M12 6 h2 v3 h-2z M3 9 h3 v3 h-3z M9 9 h3 v3 h-3z" fill="#b9b9b9"/></svg>
<div style="position:absolute;left:979px;top:785px;width:117px;height:19px;background:#1c1c1c;border-radius:3px;"></div>
<div style="position:absolute;left:986px;top:788px;font-size:12.5px;line-height:14px;color:#b5b5b5;font-weight:normal;white-space:nowrap;letter-spacing:-0.3px;">アクティブカ...</div>
<svg style="position:absolute;left:1082px;top:792px;" width="11" height="7" viewBox="0 0 11 7"><path d="M1 1 L5.5 5.5 L10 1" stroke="#b5b5b5" stroke-width="1.5" fill="none"/></svg>
<div style="position:absolute;left:1102px;top:785px;width:77px;height:19px;background:#1c1c1c;border-radius:3px;"></div>
<div style="position:absolute;left:1108px;top:788px;font-size:12.5px;line-height:14px;color:#b5b5b5;font-weight:normal;white-space:nowrap;letter-spacing:-0.3px;">1 画面</div>
<svg style="position:absolute;left:1165px;top:792px;" width="11" height="7" viewBox="0 0 11 7"><path d="M1 1 L5.5 5.5 L10 1" stroke="#b5b5b5" stroke-width="1.5" fill="none"/></svg>
<svg style="position:absolute;left:1183px;top:786px;" width="19" height="17" viewBox="0 0 19 17"><path d="M1 4 H18 M1 4 L4 1 M1 4 L4 7 M18 4 L15 1 M18 4 L15 7" stroke="#b9b9b9" stroke-width="1.5" fill="none"/><rect x="4.5" y="8.5" width="10" height="7" fill="none" stroke="#b9b9b9" stroke-width="1.6"/><path d="M4.5 12 H14.5" stroke="#b9b9b9" stroke-width="1.3"/></svg>
<div style="position:absolute;left:1206px;top:784px;width:24px;height:21px;background:#1a1a1a;border-radius:2px;"></div>
<svg style="position:absolute;left:1209px;top:786px;" width="18" height="17" viewBox="0 0 18 17"><path d="M1 14 V1 H16 V8" stroke="#b9b9b9" stroke-width="1.6" fill="none"/><path d="M1 14 H9" stroke="#b9b9b9" stroke-width="1.6"/><path d="M9.5 3 L5 8.5 H8 L6.5 12.5 L11 7 H8Z" fill="#b9b9b9"/><path d="M11 12 H17 L14 15.5Z" fill="#b9b9b9"/></svg>
<svg style="position:absolute;left:1234px;top:786px;" width="17" height="15" viewBox="0 0 17 15"><rect x="6" y="0.5" width="5" height="4" fill="#b9b9b9"/><path d="M1 13.5 V6 H16 V13.5 H1Z M4 9 V12 M8.5 9 V12 M13 9 V12" stroke="#b9b9b9" stroke-width="1.5" fill="none"/></svg>
<svg style="position:absolute;left:1258px;top:786px;" width="17" height="16" viewBox="0 0 17 16"><rect x="6" y="0.5" width="5" height="4.5" fill="#b9b9b9"/><path d="M8.5 5 V8 M3 11 V8 H14 V11" stroke="#b9b9b9" stroke-width="1.4" fill="none"/><rect x="0.5" y="10.5" width="5.5" height="5" fill="#b9b9b9"/><rect x="11" y="10.5" width="5.5" height="5" fill="#b9b9b9"/></svg>
<div style="position:absolute;left:1280px;top:785px;width:1px;height:19px;background:#303030;"></div>
<svg style="position:absolute;left:1285px;top:786px;" width="16" height="16" viewBox="0 0 16 16"><circle cx="8" cy="8" r="7.2" fill="#b9b9b9"/><path d="M8 1 L10 6 M15 8 L10 10 M8 15 L6 10 M1 8 L6 6 M3 3 L8 5 M13 13 L8 11" stroke="#262626" stroke-width="1.2"/><circle cx="8" cy="8" r="2.2" fill="#262626"/></svg>
<div style="position:absolute;left:1307px;top:789px;font-size:12px;line-height:14px;color:#5896e0;font-weight:normal;white-space:nowrap;">+0.0</div>
<div style="position:absolute;left:1751px;top:73px;width:246px;height:735px;background:#151515;"></div>
<div style="position:absolute;left:1753px;top:73px;width:228px;height:31px;background:#262626;"></div>
<div style="position:absolute;left:1766px;top:83px;font-size:12.5px;line-height:14px;color:#a9a9a9;font-weight:normal;white-space:nowrap;">情報</div>
<div style="position:absolute;left:1753px;top:106px;width:228px;height:32px;background:#262626;"></div>
<div style="position:absolute;left:1766px;top:116px;font-size:12.5px;line-height:14px;color:#a9a9a9;font-weight:normal;white-space:nowrap;">オーディオ</div>
<div style="position:absolute;left:1753px;top:140px;width:228px;height:31px;background:#262626;"></div>
<div style="position:absolute;left:1766px;top:150px;font-size:12.5px;line-height:14px;color:#a9a9a9;font-weight:normal;white-space:nowrap;">プレビュー</div>
<div style="position:absolute;left:1753px;top:173px;width:228px;height:32px;background:#262626;"></div>
<div style="position:absolute;left:1766px;top:183px;font-size:12.5px;line-height:14px;color:#a9a9a9;font-weight:normal;white-space:nowrap;">エフェクト＆プリセット</div>
<div style="position:absolute;left:1753px;top:207px;width:228px;height:31px;background:#262626;"></div>
<div style="position:absolute;left:1766px;top:217px;font-size:12.5px;line-height:14px;color:#a9a9a9;font-weight:normal;white-space:nowrap;">整列</div>
<div style="position:absolute;left:1753px;top:240px;width:228px;height:32px;background:#262626;"></div>
<div style="position:absolute;left:1766px;top:250px;font-size:12.5px;line-height:14px;color:#a9a9a9;font-weight:normal;white-space:nowrap;">CC ライブラリ</div>
<div style="position:absolute;left:1753px;top:274px;width:228px;height:31px;background:#262626;"></div>
<div style="position:absolute;left:1766px;top:284px;font-size:12.5px;line-height:14px;color:#a9a9a9;font-weight:normal;white-space:nowrap;">トラッカー</div>
<div style="position:absolute;left:1753px;top:307px;width:228px;height:32px;background:#262626;"></div>
<div style="position:absolute;left:1766px;top:317px;font-size:12.5px;line-height:14px;color:#a9a9a9;font-weight:normal;white-space:nowrap;">コンテンツに応じた塗りつぶし</div>
<div style="position:absolute;left:1753px;top:341px;width:228px;height:31px;background:#262626;"></div>
<div style="position:absolute;left:1766px;top:351px;font-size:12.5px;line-height:14px;color:#a9a9a9;font-weight:normal;white-space:nowrap;">段落</div>
<div style="position:absolute;left:1981px;top:73px;width:15px;height:735px;background:#262626;"></div>
<div style="position:absolute;left:1753px;top:374px;width:243px;height:434px;background:#262626;"></div>
<div style="position:absolute;left:1765px;top:383px;font-size:12.5px;line-height:14px;color:#d6d6d6;font-weight:bold;white-space:nowrap;">文字</div>
<svg style="position:absolute;left:1960px;top:386px;" width="10" height="9" viewBox="0 0 10 9"><rect x="0" y="0" width="10" height="1.6" fill="#b5b5b5"/><rect x="0" y="3.6" width="10" height="1.6" fill="#b5b5b5"/><rect x="0" y="7.2" width="10" height="1.6" fill="#b5b5b5"/></svg>
<div style="position:absolute;left:1758px;top:416px;width:136px;height:19px;background:#191919;border-radius:2px;"></div>
<div style="position:absolute;left:1873px;top:417px;width:1px;height:17px;background:#2c2c2c;"></div>
<div style="position:absolute;left:1765px;top:419px;font-size:12px;line-height:14px;color:#d0d0d0;font-weight:normal;white-space:nowrap;letter-spacing:-0.4px;">TBUDゴシック Std</div>
<svg style="position:absolute;left:1878px;top:422px;" width="11" height="7" viewBox="0 0 11 7"><path d="M1 1 L5.5 5.5 L10 1" stroke="#b5b5b5" stroke-width="1.4" fill="none"/></svg>
<div style="position:absolute;left:1758px;top:442px;width:136px;height:20px;background:#191919;border-radius:2px;"></div>
<div style="position:absolute;left:1873px;top:443px;width:1px;height:18px;background:#2c2c2c;"></div>
<div style="position:absolute;left:1768px;top:446px;font-size:12px;line-height:14px;color:#d0d0d0;font-weight:normal;white-space:nowrap;">-</div>
<svg style="position:absolute;left:1878px;top:449px;" width="11" height="7" viewBox="0 0 11 7"><path d="M1 1 L5.5 5.5 L10 1" stroke="#b5b5b5" stroke-width="1.4" fill="none"/></svg>
<svg style="position:absolute;left:1900px;top:416px;" width="22" height="22" viewBox="0 0 22 22"><path d="M14.5 1.5 C16 0 18.5 0 20 1.5 C21.5 3 21.5 5.5 20 7 L17.5 9.5 L12 4Z" fill="#b9b9b9"/><path d="M11 3.5 L18 10.5" stroke="#b9b9b9" stroke-width="2.2"/><path d="M13.5 7 L4 16.5 C2.5 18 2.5 19.5 3.5 20.5 C4.5 21.5 6 21.5 7.5 20 L17 10.5" stroke="#b9b9b9" stroke-width="1.5" fill="none"/></svg>
<svg style="position:absolute;left:1898px;top:442px;" width="25" height="21" viewBox="0 0 25 21"><rect x="0.5" y="0.5" width="24" height="20" fill="#c6c6c6"/><rect x="2.5" y="2.5" width="20" height="7" fill="#111"/><rect x="2.5" y="11.5" width="20" height="7.5" fill="#fafafa"/></svg>
<svg style="position:absolute;left:1927px;top:414px;" width="50" height="50" viewBox="0 0 50 50"><rect x="15" y="16" width="33" height="32" fill="#fafafa" stroke="#666" stroke-width="0.6"/><rect x="25.5" y="26" width="12.5" height="12" fill="#1c1c1c"/><path d="M15.5 47.5 L47.5 16.5" stroke="#d03a35" stroke-width="1.6"/><rect x="1" y="1" width="33" height="32" fill="#383838" stroke="#151515" stroke-width="1"/><rect x="0.5" y="33.5" width="13" height="13" fill="#f0f0f0" stroke="#555"/><path d="M1 46 L13 34" stroke="#d03a35" stroke-width="1.1"/><path d="M37 6 C40 3 45 4 46 9 L46 12" stroke="#c4c4c4" stroke-width="2" fill="none"/><path d="M42.5 10.5 L46 15 L49.5 10.5Z" fill="#c4c4c4"/><path d="M35 3 L38.5 7.5 L40 2.5Z" fill="#c4c4c4"/></svg>
<div style="position:absolute;left:1757px;top:469px;width:218px;height:1px;background:#2d2d2d;"></div>
<svg style="position:absolute;left:1756px;top:474px;" width="23" height="19" viewBox="0 0 23 19"><text x="0" y="17" font-family="Liberation Serif" font-weight="bold" font-size="13" fill="#b9b9b9">T</text><text x="7" y="17" font-family="Liberation Serif" font-weight="bold" font-size="21" fill="#b9b9b9">T</text></svg>
<div style="position:absolute;left:1786px;top:478px;font-size:11.5px;line-height:13px;color:#a6a6a6;font-weight:normal;white-space:nowrap;"><span style="color:#5896e0">243</span> px</div>
<svg style="position:absolute;left:1861px;top:480px;" width="8" height="7" viewBox="0 0 8 7"><path d="M0.5 0.5 H7.5 L4 6.5Z" fill="#a5a5a5"/></svg>
<svg style="position:absolute;left:1874px;top:474px;" width="22" height="24" viewBox="0 0 22 24"><path d="M11 1 L7 8 H15Z M11 9 L7 16 H15Z" fill="none" stroke="#b9b9b9" stroke-width="1.3"/><path d="M8 5.5 H14 M8 13.5 H14" stroke="#b9b9b9" stroke-width="1.2"/><rect x="6" y="16.5" width="10" height="1.3" fill="#b9b9b9"/><path d="M3 12 V22 M1 14 L3 11.5 L5 14 M1 20 L3 22.5 L5 20" stroke="#b9b9b9" stroke-width="1.3" fill="none"/></svg>
<div style="position:absolute;left:1911px;top:477px;font-size:12px;line-height:14px;color:#5896e0;font-weight:normal;white-space:nowrap;">自動</div>
<svg style="position:absolute;left:1962px;top:480px;" width="8" height="7" viewBox="0 0 8 7"><path d="M0.5 0.5 H7.5 L4 6.5Z" fill="#a5a5a5"/></svg>
<svg style="position:absolute;left:1756px;top:497px;" width="23" height="21" viewBox="0 0 23 21"><path d="M1 1 L5 12 L9 1" stroke="#b9b9b9" stroke-width="1.6" fill="none"/><path d="M12 1 L7 12" stroke="#b9b9b9" stroke-width="1.2"/><path d="M11 12 L15 1 L19 12 M12.5 8 H17.5" stroke="#b9b9b9" stroke-width="1.6" fill="none"/><path d="M8 17 H21 M8 17 L11 14.5 M8 17 L11 19.5" stroke="#b9b9b9" stroke-width="1.4" fill="none"/></svg>
<div style="position:absolute;left:1785px;top:501px;font-size:12px;line-height:14px;color:#5a5a5a;font-weight:normal;white-space:nowrap;">メトリクス</div>
<svg style="position:absolute;left:1861px;top:504px;" width="8" height="7" viewBox="0 0 8 7"><path d="M0.5 0.5 H7.5 L4 6.5Z" fill="#a5a5a5"/></svg>
<svg style="position:absolute;left:1874px;top:498px;" width="23" height="21" viewBox="0 0 23 21"><rect x="1" y="0.5" width="21" height="12" fill="#b9b9b9"/><path d="M3 2 L6.5 11 L10 2 M11 11 L14.5 2 L18 11 M12.5 8 H16.5" stroke="#232323" stroke-width="1.5" fill="none"/><path d="M2 17 H21 M2 17 L5 14.5 M2 17 L5 19.5 M21 17 L18 14.5 M21 17 L18 19.5" stroke="#b9b9b9" stroke-width="1.3" fill="none"/></svg>
<div style="position:absolute;left:1911px;top:501px;font-size:12px;line-height:14px;color:#5896e0;font-weight:normal;white-space:nowrap;">0</div>
<svg style="position:absolute;left:1962px;top:504px;" width="8" height="7" viewBox="0 0 8 7"><path d="M0.5 0.5 H7.5 L4 6.5Z" fill="#a5a5a5"/></svg>
<div style="position:absolute;left:1757px;top:525px;width:218px;height:1px;background:#2d2d2d;"></div>
<svg style="position:absolute;left:1759px;top:534px;" width="18" height="14" viewBox="0 0 18 14"><rect x="0" y="0" width="17" height="2.4" fill="#b9b9b9"/><rect x="0" y="5.6" width="17" height="2.4" fill="#b9b9b9"/><rect x="0" y="11.2" width="17" height="2.4" fill="#b9b9b9"/></svg>
<div style="position:absolute;left:1785px;top:536px;font-size:11.5px;line-height:13px;color:#a6a6a6;font-weight:normal;white-space:nowrap;"><span style="color:#5896e0">-</span> px</div>
<svg style="position:absolute;left:1834px;top:538px;" width="8" height="7" viewBox="0 0 8 7"><path d="M0.5 0.5 H7.5 L4 6.5Z" fill="#a5a5a5"/></svg>
<div style="position:absolute;left:1849px;top:532px;width:126px;height:20px;background:#1c1c1c;border-radius:3px;"></div>
<svg style="position:absolute;left:1960px;top:539px;" width="11" height="7" viewBox="0 0 11 7"><path d="M1 1 L5.5 5.5 L10 1" stroke="#b5b5b5" stroke-width="1.4" fill="none"/></svg>
<div style="position:absolute;left:1757px;top:559px;width:218px;height:1px;background:#2d2d2d;"></div>
<svg style="position:absolute;left:1756px;top:566px;" width="23" height="19" viewBox="0 0 23 19"><path d="M3 2 V17 M1 4.5 L3 1.5 L5 4.5 M1 14.5 L3 17.5 L5 14.5" stroke="#b9b9b9" stroke-width="1.4" fill="none"/><text x="7" y="17" font-family="Liberation Serif" font-weight="bold" font-size="20" fill="#b9b9b9">T</text></svg>
<div style="position:absolute;left:1786px;top:570px;font-size:11.5px;line-height:13px;color:#a6a6a6;font-weight:normal;white-space:nowrap;"><span style="color:#5896e0">100</span> %</div>
<svg style="position:absolute;left:1834px;top:572px;" width="8" height="7" viewBox="0 0 8 7"><path d="M0.5 0.5 H7.5 L4 6.5Z" fill="#a5a5a5"/></svg>
<svg style="position:absolute;left:1874px;top:566px;" width="22" height="21" viewBox="0 0 22 21"><text x="3" y="14" font-family="Liberation Serif" font-weight="bold" font-size="18" fill="#b9b9b9">T</text><path d="M1 18 H21 M1 18 L4 15.5 M1 18 L4 20.5 M21 18 L18 15.5 M21 18 L18 20.5" stroke="#b9b9b9" stroke-width="1.3" fill="none"/></svg>
<div style="position:absolute;left:1911px;top:570px;font-size:11.5px;line-height:13px;color:#a6a6a6;font-weight:normal;white-space:nowrap;"><span style="color:#5896e0">100</span> %</div>
<svg style="position:absolute;left:1962px;top:572px;" width="8" height="7" viewBox="0 0 8 7"><path d="M0.5 0.5 H7.5 L4 6.5Z" fill="#a5a5a5"/></svg>
<svg style="position:absolute;left:1756px;top:590px;" width="21" height="21" viewBox="0 0 21 21"><path d="M1 14 L6 2 L11 14 M3 10 H9" stroke="#b9b9b9" stroke-width="1.6" fill="none"/><text x="11" y="9" font-family="Liberation Sans" font-size="9" fill="#b9b9b9">a</text><rect x="0" y="15.5" width="12" height="1.3" fill="#b9b9b9"/><path d="M15 11 V20 M13 13 L15 10.5 L17 13" stroke="#b9b9b9" stroke-width="1.3" fill="none"/></svg>
<div style="position:absolute;left:1786px;top:593px;font-size:11.5px;line-height:13px;color:#a6a6a6;font-weight:normal;white-space:nowrap;"><span style="color:#5896e0">0</span> px</div>
<svg style="position:absolute;left:1834px;top:595px;" width="8" height="7" viewBox="0 0 8 7"><path d="M0.5 0.5 H7.5 L4 6.5Z" fill="#a5a5a5"/></svg>
<svg style="position:absolute;left:1875px;top:589px;" width="20" height="22" viewBox="0 0 20 22"><rect x="2" y="0.5" width="16" height="14" fill="none" stroke="#b9b9b9" stroke-width="1" stroke-dasharray="1.5 1.2"/><text x="3.5" y="12.5" font-size="12" fill="#b9b9b9">あ</text><path d="M1 18.5 H8 M6 16.5 L8 18.5 L6 20.5 M19 18.5 H12 M14 16.5 L12 18.5 L14 20.5" stroke="#b9b9b9" stroke-width="1.2" fill="none"/></svg>
<div style="position:absolute;left:1911px;top:593px;font-size:11.5px;line-height:13px;color:#a6a6a6;font-weight:normal;white-space:nowrap;"><span style="color:#5896e0">0</span> %</div>
<svg style="position:absolute;left:1962px;top:595px;" width="8" height="7" viewBox="0 0 8 7"><path d="M0.5 0.5 H7.5 L4 6.5Z" fill="#a5a5a5"/></svg>
<div style="position:absolute;left:1757px;top:617px;width:218px;height:1px;background:#2d2d2d;"></div>
<div style="position:absolute;left:1785px;top:624px;font-size:18px;line-height:19px;color:#c4c4c4;font-weight:bold;white-space:nowrap;font-family:'Liberation Serif',serif;">T</div>
<div style="position:absolute;left:1814px;top:624px;font-size:18px;line-height:19px;color:#c4c4c4;font-weight:bold;white-space:nowrap;font-family:'Liberation Serif',serif;font-style:italic;">T</div>
<div style="position:absolute;left:1843px;top:624px;font-size:18px;line-height:19px;color:#c4c4c4;font-weight:bold;white-space:nowrap;font-family:'Liberation Serif',serif;">TT</div>
<div style="position:absolute;left:1872px;top:624px;font-size:18px;line-height:19px;color:#c4c4c4;font-weight:bold;white-space:nowrap;font-family:'Liberation Serif',serif;">T<span style="font-size:11px">T</span></div>
<div style="position:absolute;left:1906px;top:624px;font-size:18px;line-height:19px;color:#c4c4c4;font-weight:bold;white-space:nowrap;font-family:'Liberation Serif',serif;">T<span style="font-size:8px;vertical-align:6px">1</span></div>
<div style="position:absolute;left:1934px;top:624px;font-size:18px;line-height:19px;color:#c4c4c4;font-weight:bold;white-space:nowrap;font-family:'Liberation Serif',serif;">T<span style="font-size:8px;vertical-align:-3px">1</span></div>
<svg style="position:absolute;left:1763px;top:656px;" width="18" height="18" viewBox="0 0 18 18"><rect x="1.2" y="1.2" width="14.6" height="14.6" rx="2" fill="none" stroke="#9a9a9a" stroke-width="2"/></svg>
<div style="position:absolute;left:1783px;top:660px;font-size:12px;line-height:14px;color:#a6a6a6;font-weight:normal;white-space:nowrap;">合字</div>
<svg style="position:absolute;left:1873px;top:656px;" width="18" height="18" viewBox="0 0 18 18"><rect x="1.2" y="1.2" width="14.6" height="14.6" rx="2" fill="none" stroke="#9a9a9a" stroke-width="2"/></svg>
<div style="position:absolute;left:1893px;top:660px;font-size:12px;line-height:14px;color:#a6a6a6;font-weight:normal;white-space:nowrap;letter-spacing:-0.3px;">ヒンディー数字</div>
<div style="position:absolute;left:0px;top:811px;width:1997px;height:231px;background:#272727;"></div>
<div style="position:absolute;left:28px;top:821px;font-size:12px;line-height:14px;color:#9d9d9d;font-weight:normal;white-space:nowrap;">レンダーキュー</div>
<div style="position:absolute;left:173px;top:821px;width:12px;height:12px;background:#c2ad88;border:1px solid #141414;"></div>
<div style="position:absolute;left:196px;top:821px;font-size:12.5px;line-height:14px;color:#a9a9a9;font-weight:normal;white-space:nowrap;letter-spacing:-0.2px;">Numbers</div>
<div style="position:absolute;left:286px;top:821px;font-size:12px;line-height:13px;color:#a9a9a9;font-weight:normal;white-space:nowrap;">×</div>
<div style="position:absolute;left:303px;top:821px;width:12px;height:12px;background:#c2ad88;border:1px solid #141414;"></div>
<div style="position:absolute;left:327px;top:821px;font-size:12.5px;line-height:14px;color:#d0d0d0;font-weight:normal;white-space:nowrap;letter-spacing:-0.2px;">Master</div>
<svg style="position:absolute;left:371px;top:823px;" width="11" height="10" viewBox="0 0 11 10"><rect x="0" y="0.5" width="11" height="1.7" fill="#b5b5b5"/><rect x="0" y="4.2" width="11" height="1.7" fill="#b5b5b5"/><rect x="0" y="7.9" width="11" height="1.7" fill="#b5b5b5"/></svg>
<div style="position:absolute;left:287px;top:838px;width:96px;height:3px;background:#c9c9c9;"></div>
<div style="position:absolute;left:25px;top:848px;font-size:16.8px;line-height:18px;color:#5ea0ee;font-weight:bold;white-space:nowrap;">0:00:00:00</div>
<div style="position:absolute;left:10px;top:865px;font-size:13.6px;line-height:15px;color:#3b7ac8;font-weight:normal;white-space:nowrap;">00000 (23.976 fps)</div>
<div style="position:absolute;left:137px;top:852px;width:415px;height:20px;background:#171717;border-radius:3px;"></div>
<svg style="position:absolute;left:143px;top:855px;" width="22" height="15" viewBox="0 0 22 15"><circle cx="8" cy="5.5" r="3.8" stroke="#b9b9b9" stroke-width="1.4" fill="none"/><path d="M5.3 8.2 L1.5 12" stroke="#b9b9b9" stroke-width="1.6" stroke-linecap="round"/><path d="M13 9.5 H19 L16 12.5Z" fill="#b9b9b9"/></svg>
<svg style="position:absolute;left:569px;top:852px;" width="22" height="20" viewBox="0 0 22 20"><path d="M1 4 H10 M5 4 V15 H12 M5 9 H12" stroke="#b9b9b9" stroke-width="1.6" fill="none"/><rect x="9" y="1.5" width="5" height="5" fill="#b9b9b9"/><rect x="12" y="7" width="5" height="4.5" fill="#b9b9b9"/><rect x="12" y="12.5" width="5" height="4.5" fill="#b9b9b9"/><path d="M16 17.5 H21 L18.5 20Z" fill="#b9b9b9"/></svg>
<svg style="position:absolute;left:606px;top:851px;" width="23" height="22" viewBox="0 0 23 22"><path d="M4 0 V8 M0 4 H8 M1.2 1.2 L6.8 6.8 M6.8 1.2 L1.2 6.8" stroke="#b9b9b9" stroke-width="1.3"/><path d="M13 6 L21 10 V18 L13 21.5 L5.5 18 V10Z" fill="none" stroke="#b9b9b9" stroke-width="1.6"/><path d="M5.5 10 L13 14 L21 10 M13 14 V21.5" stroke="#b9b9b9" stroke-width="1.6" fill="none"/></svg>
<svg style="position:absolute;left:644px;top:851px;" width="22" height="20" viewBox="0 0 22 20"><path d="M3 11 C3 4 8 2.5 11 2.5 C14 2.5 19 4 19 11 Z" fill="#b9b9b9"/><circle cx="8" cy="8" r="1.8" fill="#272727"/><circle cx="14" cy="8" r="1.8" fill="#272727"/><rect x="9.5" y="9" width="3" height="8" rx="1.5" fill="#b9b9b9"/><rect x="2" y="13" width="18" height="5" fill="#8a8a8a"/><rect x="9.5" y="13" width="3" height="3" rx="1.5" fill="#b9b9b9"/></svg>
<svg style="position:absolute;left:674px;top:852px;" width="20" height="20" viewBox="0 0 20 20"><rect x="5" y="1" width="14" height="14" fill="#b9b9b9"/><path d="M3 3 V17 H17" stroke="#b9b9b9" stroke-width="1.4" fill="none"/><path d="M1 5 V19 H15" stroke="#b9b9b9" stroke-width="1.3" fill="none"/><path d="M8 1 V15 M16 1 V15" stroke="#232323" stroke-width="1"/><rect x="9" y="5" width="6" height="5" fill="#232323"/></svg>
<svg style="position:absolute;left:704px;top:852px;" width="20" height="20" viewBox="0 0 20 20"><circle cx="7" cy="13" r="5.8" fill="none" stroke="#b9b9b9" stroke-width="1.5"/><circle cx="9.5" cy="10.5" r="5.8" fill="#272727" stroke="#b9b9b9" stroke-width="1.5"/><circle cx="12" cy="8" r="5.8" fill="#7a7a7a" stroke="#b9b9b9" stroke-width="1.5"/></svg>
<svg style="position:absolute;left:741px;top:851px;" width="21" height="22" viewBox="0 0 21 22"><rect x="1.5" y="3" width="18" height="17" fill="none" stroke="#b9b9b9" stroke-width="1.6"/><path d="M5 1 V5 M10.5 1 V5 M16 1 V5" stroke="#b9b9b9" stroke-width="1.3"/><path d="M3.5 8 C8 8 8 17 17.5 17" stroke="#b9b9b9" stroke-width="1.5" fill="none"/></svg>
<div style="position:absolute;left:0px;top:882px;width:778px;height:21px;background:#2a2a2a;"></div>
<div style="position:absolute;left:0px;top:903px;width:778px;height:1px;background:#1c1c1c;"></div>
<svg style="position:absolute;left:3px;top:888px;" width="16" height="11" viewBox="0 0 16 11"><path d="M1 5.5 C4 0.5 12 0.5 15 5.5 C12 10.5 4 10.5 1 5.5Z" fill="#b9b9b9"/><circle cx="8" cy="5.5" r="2.6" fill="#262626"/><circle cx="8" cy="5.5" r="1.2" fill="#b9b9b9"/></svg>
<svg style="position:absolute;left:20px;top:886px;" width="15" height="14" viewBox="0 0 15 14"><path d="M1 4.5 H4 L8 1 V13 L4 9.5 H1Z" fill="#b9b9b9"/><path d="M10 4 A4 4 0 0 1 10 10 M12 2 A7 7 0 0 1 12 12" stroke="#b9b9b9" stroke-width="1.3" fill="none"/></svg>
<div style="position:absolute;left:40px;top:889px;width:9px;height:9px;background:#b9b9b9;border-radius:50%;"></div>
<svg style="position:absolute;left:55px;top:885px;" width="12" height="15" viewBox="0 0 12 15"><path d="M3 7 V4.5 A3 3 0 0 1 9 4.5 V7" stroke="#b9b9b9" stroke-width="1.8" fill="none"/><rect x="1" y="6.5" width="10" height="8" rx="1" fill="#b9b9b9"/><rect x="5.2" y="9" width="1.6" height="3" fill="#2a2a2a"/></svg>
<div style="position:absolute;left:75px;top:887px;width:1px;height:12px;background:#3c3c3c;"></div>
<div style="position:absolute;left:109px;top:887px;width:1px;height:12px;background:#3c3c3c;"></div>
<div style="position:absolute;left:147px;top:887px;width:1px;height:12px;background:#3c3c3c;"></div>
<div style="position:absolute;left:292px;top:887px;width:1px;height:12px;background:#3c3c3c;"></div>
<div style="position:absolute;left:444px;top:887px;width:1px;height:12px;background:#3c3c3c;"></div>
<div style="position:absolute;left:629px;top:887px;width:1px;height:12px;background:#3c3c3c;"></div>
<div style="position:absolute;left:761px;top:887px;width:1px;height:12px;background:#3c3c3c;"></div>
<svg style="position:absolute;left:88px;top:885px;" width="16" height="15" viewBox="0 0 16 15"><path d="M1 1 H8 L15 8 L8 14.5 L1 7.5V1Z" fill="#a9a9a9"/><circle cx="4.5" cy="4.5" r="1.4" fill="#2a2a2a"/></svg>
<div style="position:absolute;left:116px;top:888px;font-size:11px;line-height:13px;color:#8a8a8a;font-weight:normal;white-space:nowrap;">#</div>
<div style="position:absolute;left:153px;top:886px;font-size:12.5px;line-height:14px;color:#8f8f8f;font-weight:normal;white-space:nowrap;">ソース名</div>
<svg style="position:absolute;left:297px;top:886px;" width="135" height="15" viewBox="0 0 135 15"><path d="M1 7 C1 1 13 1 13 7Z" fill="#b9b9b9"/><path d="M4.5 5.5 A2.5 2.5 0 0 1 9.5 5.5" fill="#2a2a2a"/><rect x="5.8" y="6" width="2.4" height="5" fill="#b9b9b9"/><rect x="1" y="10" width="12" height="3" fill="#b9b9b9"/>
    <g transform="translate(24,7)"><circle r="3" fill="#b9b9b9"/><path d="M0 -6 V6 M-6 0 H6 M-4.2 -4.2 L4.2 4.2 M4.2 -4.2 L-4.2 4.2" stroke="#b9b9b9" stroke-width="1.2"/></g>
    <path d="M35 2 L46 13" stroke="#b9b9b9" stroke-width="1.4" stroke-dasharray="1.5 1"/>
    <text x="50" y="12" font-family="Liberation Serif" font-style="italic" font-size="13" fill="#b9b9b9">fx</text>
    <rect x="68" y="2" width="12" height="11" fill="none" stroke="#b9b9b9" stroke-width="1.4"/><path d="M68 5 H80 M68 10 H80 M71 2 V13" stroke="#b9b9b9" stroke-width="1.1"/>
    <circle cx="90" cy="6" r="4.5" fill="#b9b9b9"/><path d="M85 8 A4.5 4.5 0 0 0 91 13" stroke="#b9b9b9" stroke-width="1.3" fill="none"/>
    <circle cx="106" cy="7" r="6" fill="none" stroke="#b9b9b9" stroke-width="1.3"/><path d="M106 1 A6 6 0 0 1 106 13Z" fill="#b9b9b9"/><path d="M102 11 L110 3" stroke="#2a2a2a" stroke-width="1.2"/>
    <path d="M124 1 L130 4 V10.5 L124 13.5 L118 10.5 V4Z" fill="none" stroke="#b9b9b9" stroke-width="1.4"/><path d="M118 4 L124 7 L130 4 M124 7 V13.5" stroke="#b9b9b9" stroke-width="1.3" fill="none"/></svg>
<div style="position:absolute;left:452px;top:886px;font-size:12.5px;line-height:14px;color:#8f8f8f;font-weight:normal;white-space:nowrap;">モード</div>
<div style="position:absolute;left:535px;top:888px;font-size:11px;line-height:13px;color:#9a9a9a;font-weight:normal;white-space:nowrap;">T</div>
<div style="position:absolute;left:554px;top:887px;font-size:11px;line-height:14px;color:#8f8f8f;font-weight:normal;white-space:nowrap;letter-spacing:-3px;">トラックマット</div>
<div style="position:absolute;left:636px;top:886px;font-size:12.5px;line-height:14px;color:#8f8f8f;font-weight:normal;white-space:nowrap;">親とリンク</div>
<div style="position:absolute;left:0px;top:904px;width:778px;height:22px;background:#3b3b3b;"></div>
<div style="position:absolute;left:0px;top:926px;width:778px;height:1px;background:#1e1e1e;"></div>
<div style="position:absolute;left:3px;top:906px;width:15px;height:16px;background:#222222;"></div>
<svg style="position:absolute;left:3px;top:909px;" width="16" height="11" viewBox="0 0 16 11"><path d="M1 5.5 C4 0.5 12 0.5 15 5.5 C12 10.5 4 10.5 1 5.5Z" fill="#b9b9b9"/><circle cx="8" cy="5.5" r="2.6" fill="#262626"/><circle cx="8" cy="5.5" r="1.2" fill="#b9b9b9"/></svg>
<div style="position:absolute;left:36px;top:907px;width:15px;height:16px;background:#333333;"></div>
<div style="position:absolute;left:53px;top:907px;width:15px;height:16px;background:#333333;"></div>
<svg style="position:absolute;left:80px;top:911px;" width="11" height="7" viewBox="0 0 11 7"><path d="M1 1 L5.5 5.5 L10 1" stroke="#b5b5b5" stroke-width="1.5" fill="none"/></svg>
<div style="position:absolute;left:94px;top:907px;width:16px;height:17px;background:#6b7de2;border:1px solid #2a2a2a;"></div>
<div style="position:absolute;left:117px;top:909px;font-size:12.5px;line-height:14px;color:#c8c8c8;font-weight:normal;white-space:nowrap;">1</div>
<svg style="position:absolute;left:150px;top:907px;" width="15" height="15" viewBox="0 0 15 15"><path d="M7.5 0.5 L9.5 5.3 L14.5 5.6 L10.6 8.8 L11.9 13.9 L7.5 11.1 L3.1 13.9 L4.4 8.8 L0.5 5.6 L5.5 5.3Z" fill="#c8c8c8"/></svg>
<div style="position:absolute;left:170px;top:905px;width:121px;height:20px;background:#2e2e2e;border:2px solid #a3a3a3;"></div>
<div style="position:absolute;left:174px;top:909px;font-size:11.6px;line-height:14px;color:#c8c8c8;font-weight:normal;white-space:nowrap;letter-spacing:-0.2px;">シェイプレイヤー 1</div>
<svg style="position:absolute;left:297px;top:907px;" width="50" height="16" viewBox="0 0 50 16"><path d="M1 7 C1 1 13 1 13 7Z" fill="#b9b9b9"/><path d="M4.5 5.5 A2.5 2.5 0 0 1 9.5 5.5" fill="#3b3b3b"/><rect x="5.8" y="6" width="2.4" height="5" fill="#b9b9b9"/><rect x="1" y="10" width="12" height="3" fill="#b9b9b9"/><rect x="16" y="0" width="15" height="16" fill="#333"/><g transform="translate(23.5,7.5)"><circle r="2.5" fill="none" stroke="#777" stroke-width="1"/><path d="M0 -6 V-3 M0 3 V6 M-6 0 H-3 M3 0 H6 M-4 -4 L-2 -2 M4 4 L2 2 M4 -4 L2 -2 M-4 4 L-2 2" stroke="#777" stroke-width="1"/></g><rect x="33" y="0" width="15" height="16" fill="#333"/><path d="M35 14 L46 2" stroke="#b9b9b9" stroke-width="1.6"/></svg>
<div style="position:absolute;left:381px;top:907px;width:15px;height:16px;background:#333333;"></div>
<div style="position:absolute;left:398px;top:907px;width:15px;height:16px;background:#333333;"></div>
<div style="position:absolute;left:415px;top:907px;width:15px;height:16px;background:#333333;"></div>
<div style="position:absolute;left:449px;top:905px;width:77px;height:20px;background:#1e1e1e;"></div>
<div style="position:absolute;left:455px;top:909px;font-size:12.5px;line-height:14px;color:#d0d0d0;font-weight:normal;white-space:nowrap;">通常</div>
<svg style="position:absolute;left:512px;top:911px;" width="11" height="7" viewBox="0 0 11 7"><path d="M1 1 L5.5 5.5 L10 1" stroke="#b5b5b5" stroke-width="1.5" fill="none"/></svg>
<div style="position:absolute;left:531px;top:906px;width:15px;height:18px;background:#323232;"></div>
<svg style="position:absolute;left:634px;top:907px;" width="17" height="16" viewBox="0 0 17 16"><path d="M8.5 8 A1.5 1.5 0 1 1 10 9.5 A3.5 3.5 0 1 1 12 5 A5.5 5.5 0 1 1 3 5" stroke="#b9b9b9" stroke-width="1.4" fill="none"/></svg>
<div style="position:absolute;left:656px;top:905px;width:101px;height:20px;background:#1e1e1e;"></div>
<div style="position:absolute;left:663px;top:909px;font-size:12.5px;line-height:14px;color:#d0d0d0;font-weight:normal;white-space:nowrap;">なし</div>
<svg style="position:absolute;left:740px;top:911px;" width="11" height="7" viewBox="0 0 11 7"><path d="M1 1 L5.5 5.5 L10 1" stroke="#b5b5b5" stroke-width="1.5" fill="none"/></svg>
<div style="position:absolute;left:0px;top:927px;width:778px;height:20px;background:#272727;"></div>
<div style="position:absolute;left:0px;top:947px;width:778px;height:1px;background:#1c1c1c;"></div>
<div style="position:absolute;left:0px;top:948px;width:778px;height:20px;background:#272727;"></div>
<div style="position:absolute;left:0px;top:968px;width:778px;height:1px;background:#1c1c1c;"></div>
<div style="position:absolute;left:0px;top:969px;width:778px;height:20px;background:#272727;"></div>
<div style="position:absolute;left:0px;top:989px;width:778px;height:1px;background:#1c1c1c;"></div>
<svg style="position:absolute;left:101px;top:934px;" width="10" height="7" viewBox="0 0 10 7"><path d="M1 1 L5.0 5.0 L9 1" stroke="#b5b5b5" stroke-width="1.5" fill="none"/></svg>
<div style="position:absolute;left:122px;top:930px;font-size:11.4px;line-height:14px;color:#b5b5b5;font-weight:normal;white-space:nowrap;">コンテンツ</div>
<div style="position:absolute;left:397px;top:930px;font-size:11.5px;line-height:14px;color:#b5b5b5;font-weight:normal;white-space:nowrap;letter-spacing:-0.3px;">追加:</div>
<svg style="position:absolute;left:426px;top:928px;" width="14" height="14" viewBox="0 0 14 14"><circle cx="7" cy="7" r="6.5" fill="#cfcfcf"/><path d="M5 3.5 L10.5 7 L5 10.5Z" fill="#232323"/></svg>
<div style="position:absolute;left:3px;top:948px;width:15px;height:17px;background:#1f1f1f;"></div>
<svg style="position:absolute;left:3px;top:952px;" width="16" height="11" viewBox="0 0 16 11"><path d="M1 5.5 C4 0.5 12 0.5 15 5.5 C12 10.5 4 10.5 1 5.5Z" fill="#b9b9b9"/><circle cx="8" cy="5.5" r="2.6" fill="#262626"/><circle cx="8" cy="5.5" r="1.2" fill="#b9b9b9"/></svg>
<svg style="position:absolute;left:122px;top:952px;" width="7" height="11" viewBox="0 0 7 11"><path d="M1 1 L5.5 5.5 L1 10" stroke="#b5b5b5" stroke-width="1.5" fill="none"/></svg>
<div style="position:absolute;left:143px;top:951px;font-size:11.6px;line-height:14px;color:#b5b5b5;font-weight:normal;white-space:nowrap;">長方形 1</div>
<div style="position:absolute;left:297px;top:948px;width:142px;height:19px;background:#1c1c1c;"></div>
<div style="position:absolute;left:305px;top:951px;font-size:12.5px;line-height:14px;color:#d0d0d0;font-weight:normal;white-space:nowrap;">通常</div>
<svg style="position:absolute;left:423px;top:954px;" width="11" height="7" viewBox="0 0 11 7"><path d="M1 1 L5.5 5.5 L10 1" stroke="#b5b5b5" stroke-width="1.5" fill="none"/></svg>
<svg style="position:absolute;left:101px;top:973px;" width="7" height="11" viewBox="0 0 7 11"><path d="M1 1 L5.5 5.5 L1 10" stroke="#b5b5b5" stroke-width="1.5" fill="none"/></svg>
<div style="position:absolute;left:122px;top:972px;font-size:11.4px;line-height:14px;color:#b5b5b5;font-weight:normal;white-space:nowrap;">トランスフォーム</div>
<div style="position:absolute;left:297px;top:973px;font-size:11px;line-height:13px;color:#4f8ee8;font-weight:normal;white-space:nowrap;letter-spacing:-2.5px;">リセット</div>
<div style="position:absolute;left:778px;top:845px;width:1px;height:197px;background:#141414;"></div>
<div style="position:absolute;left:779px;top:846px;width:1197px;height:5px;background:#1a1a1a;"></div>
<div style="position:absolute;left:779px;top:851px;width:1197px;height:9px;background:#6c6c6c;"></div>
<div style="position:absolute;left:779px;top:849px;width:1197px;height:2px;background:#111;"></div>
<svg style="position:absolute;left:779px;top:849px;" width="11" height="12" viewBox="0 0 11 12"><path d="M10 0 V12 H5 A5 6 0 0 1 5 0Z" fill="#4a8fe6"/></svg>
<svg style="position:absolute;left:1968px;top:850px;" width="9" height="10" viewBox="0 0 9 10"><path d="M0 0 V10 H3.5 A4.5 5 0 0 0 3.5 0Z" fill="#4a8fe6"/></svg>
<div style="position:absolute;left:779px;top:860px;width:1197px;height:22px;background:#242424;"></div>
<div style="position:absolute;left:787px;top:874px;width:1px;height:8px;background:#a0a0a0;"></div>
<div style="position:absolute;left:846px;top:877px;width:1px;height:5px;background:#a0a0a0;"></div>
<div style="position:absolute;left:826px;top:862px;font-size:11.8px;line-height:13px;color:#ababab;font-weight:bold;white-space:nowrap;width:40px;text-align:center;">00:12f</div>
<div style="position:absolute;left:905px;top:874px;width:1px;height:8px;background:#a0a0a0;"></div>
<div style="position:absolute;left:885px;top:862px;font-size:11.8px;line-height:13px;color:#ababab;font-weight:bold;white-space:nowrap;width:40px;text-align:center;">01:00f</div>
<div style="position:absolute;left:964px;top:877px;width:1px;height:5px;background:#a0a0a0;"></div>
<div style="position:absolute;left:944px;top:862px;font-size:11.8px;line-height:13px;color:#ababab;font-weight:bold;white-space:nowrap;width:40px;text-align:center;">01:12f</div>
<div style="position:absolute;left:1024px;top:874px;width:1px;height:8px;background:#a0a0a0;"></div>
<div style="position:absolute;left:1004px;top:862px;font-size:11.8px;line-height:13px;color:#ababab;font-weight:bold;white-space:nowrap;width:40px;text-align:center;">02:00f</div>
<div style="position:absolute;left:1083px;top:877px;width:1px;height:5px;background:#a0a0a0;"></div>
<div style="position:absolute;left:1063px;top:862px;font-size:11.8px;line-height:13px;color:#ababab;font-weight:bold;white-space:nowrap;width:40px;text-align:center;">02:12f</div>
<div style="position:absolute;left:1142px;top:874px;width:1px;height:8px;background:#a0a0a0;"></div>
<div style="position:absolute;left:1122px;top:862px;font-size:11.8px;line-height:13px;color:#ababab;font-weight:bold;white-space:nowrap;width:40px;text-align:center;">03:00f</div>
<div style="position:absolute;left:1201px;top:877px;width:1px;height:5px;background:#a0a0a0;"></div>
<div style="position:absolute;left:1181px;top:862px;font-size:11.8px;line-height:13px;color:#ababab;font-weight:bold;white-space:nowrap;width:40px;text-align:center;">03:12f</div>
<div style="position:absolute;left:1260px;top:874px;width:1px;height:8px;background:#a0a0a0;"></div>
<div style="position:absolute;left:1240px;top:862px;font-size:11.8px;line-height:13px;color:#ababab;font-weight:bold;white-space:nowrap;width:40px;text-align:center;">04:00f</div>
<div style="position:absolute;left:1319px;top:877px;width:1px;height:5px;background:#a0a0a0;"></div>
<div style="position:absolute;left:1299px;top:862px;font-size:11.8px;line-height:13px;color:#ababab;font-weight:bold;white-space:nowrap;width:40px;text-align:center;">04:12f</div>
<div style="position:absolute;left:1378px;top:874px;width:1px;height:8px;background:#a0a0a0;"></div>
<div style="position:absolute;left:1358px;top:862px;font-size:11.8px;line-height:13px;color:#ababab;font-weight:bold;white-space:nowrap;width:40px;text-align:center;">05:00f</div>
<div style="position:absolute;left:1437px;top:877px;width:1px;height:5px;background:#a0a0a0;"></div>
<div style="position:absolute;left:1417px;top:862px;font-size:11.8px;line-height:13px;color:#ababab;font-weight:bold;white-space:nowrap;width:40px;text-align:center;">05:12f</div>
<div style="position:absolute;left:1496px;top:874px;width:1px;height:8px;background:#a0a0a0;"></div>
<div style="position:absolute;left:1476px;top:862px;font-size:11.8px;line-height:13px;color:#ababab;font-weight:bold;white-space:nowrap;width:40px;text-align:center;">06:00f</div>
<div style="position:absolute;left:1555px;top:877px;width:1px;height:5px;background:#a0a0a0;"></div>
<div style="position:absolute;left:1535px;top:862px;font-size:11.8px;line-height:13px;color:#ababab;font-weight:bold;white-space:nowrap;width:40px;text-align:center;">06:12f</div>
<div style="position:absolute;left:1614px;top:874px;width:1px;height:8px;background:#a0a0a0;"></div>
<div style="position:absolute;left:1594px;top:862px;font-size:11.8px;line-height:13px;color:#ababab;font-weight:bold;white-space:nowrap;width:40px;text-align:center;">07:00f</div>
<div style="position:absolute;left:1673px;top:877px;width:1px;height:5px;background:#a0a0a0;"></div>
<div style="position:absolute;left:1653px;top:862px;font-size:11.8px;line-height:13px;color:#ababab;font-weight:bold;white-space:nowrap;width:40px;text-align:center;">07:12f</div>
<div style="position:absolute;left:1732px;top:874px;width:1px;height:8px;background:#a0a0a0;"></div>
<div style="position:absolute;left:1712px;top:862px;font-size:11.8px;line-height:13px;color:#ababab;font-weight:bold;white-space:nowrap;width:40px;text-align:center;">08:00f</div>
<div style="position:absolute;left:1791px;top:877px;width:1px;height:5px;background:#a0a0a0;"></div>
<div style="position:absolute;left:1771px;top:862px;font-size:11.8px;line-height:13px;color:#ababab;font-weight:bold;white-space:nowrap;width:40px;text-align:center;">08:12f</div>
<div style="position:absolute;left:1850px;top:874px;width:1px;height:8px;background:#a0a0a0;"></div>
<div style="position:absolute;left:1830px;top:862px;font-size:11.8px;line-height:13px;color:#ababab;font-weight:bold;white-space:nowrap;width:40px;text-align:center;">09:00f</div>
<div style="position:absolute;left:1909px;top:877px;width:1px;height:5px;background:#a0a0a0;"></div>
<div style="position:absolute;left:1889px;top:862px;font-size:11.8px;line-height:13px;color:#ababab;font-weight:bold;white-space:nowrap;width:40px;text-align:center;">09:12f</div>
<div style="position:absolute;left:1968px;top:874px;width:1px;height:8px;background:#a0a0a0;"></div>
<div style="position:absolute;left:1948px;top:862px;font-size:11.8px;line-height:13px;color:#ababab;font-weight:bold;white-space:nowrap;width:40px;text-align:center;">10:00f</div>
<div style="position:absolute;left:780px;top:862px;font-size:11.8px;line-height:13px;color:#ababab;font-weight:bold;white-space:nowrap;">0:00f</div>
<div style="position:absolute;left:1976px;top:849px;width:21px;height:40px;background:#232323;"></div>
<div style="position:absolute;left:779px;top:883px;width:1189px;height:16px;background:linear-gradient(#707070,#5e5e5e);"></div>
<div style="position:absolute;left:779px;top:882px;width:1197px;height:1px;background:#151515;"></div>
<div style="position:absolute;left:779px;top:899px;width:1189px;height:1px;background:#151515;"></div>
<div style="position:absolute;left:779px;top:900px;width:1189px;height:4px;background:#5cbf4b;"></div>
<div style="position:absolute;left:779px;top:904px;width:1189px;height:1px;background:#151515;"></div>
<div style="position:absolute;left:787px;top:905px;width:1181px;height:19px;background:linear-gradient(#a4ace8 0,#a4ace8 1px,#6b7bd6 2px,#5d6dd0 60%,#5566cc);"></div>
<div style="position:absolute;left:779px;top:905px;width:8px;height:20px;background:#3b3b3b;"></div>
<div style="position:absolute;left:1968px;top:905px;width:8px;height:21px;background:#444;"></div>
<svg style="position:absolute;left:779px;top:883px;" width="9" height="20" viewBox="0 0 9 20"><path d="M8 0 V20 H4.5 A4 4 0 0 1 0.5 16 V4 A4 4 0 0 1 4.5 0Z" fill="#4a8fe6"/></svg>
<svg style="position:absolute;left:1968px;top:883px;" width="8" height="18" viewBox="0 0 8 18"><path d="M0 0 V17 H3 A4 4 0 0 0 7 13 V4 A4 4 0 0 0 3 0Z" fill="#4a8fe6"/></svg>
<div style="position:absolute;left:779px;top:926px;width:1189px;height:116px;background:#333333;"></div>
<div style="position:absolute;left:779px;top:926px;width:1189px;height:1px;background:#292929;"></div>
<div style="position:absolute;left:779px;top:947px;width:1189px;height:1px;background:#292929;"></div>
<div style="position:absolute;left:779px;top:968px;width:1189px;height:1px;background:#292929;"></div>
<div style="position:absolute;left:779px;top:989px;width:1189px;height:1px;background:#292929;"></div>
<div style="position:absolute;left:1968px;top:926px;width:8px;height:116px;background:#3a3a3a;"></div>
<svg style="position:absolute;left:783px;top:929px;" width="10" height="15" viewBox="0 0 10 15"><path d="M1 1.2 H9 M1 13.8 H9 M5 1 V14" stroke="#d0d0d0" stroke-width="2"/></svg>
<svg style="position:absolute;left:783px;top:950px;" width="10" height="15" viewBox="0 0 10 15"><path d="M1 1.2 H9 M1 13.8 H9 M5 1 V14" stroke="#d0d0d0" stroke-width="2"/></svg>
<svg style="position:absolute;left:783px;top:971px;" width="10" height="15" viewBox="0 0 10 15"><path d="M1 1.2 H9 M1 13.8 H9 M5 1 V14" stroke="#d0d0d0" stroke-width="2"/></svg>
<svg style="position:absolute;left:1978px;top:884px;" width="14" height="17" viewBox="0 0 14 17"><path d="M1 1 H13 V10 L7 16 L1 10Z" fill="#c0c0c0"/></svg>
<svg style="position:absolute;left:1976px;top:905px;" width="17" height="17" viewBox="0 0 17 17"><path d="M9 4 H16 V12 H9 M9 4 L1.5 8.5 L9 12" fill="none" stroke="#c8c8c8" stroke-width="1.6"/><rect x="9" y="4" width="7" height="8" fill="#c8c8c8"/><circle cx="6" cy="10" r="2.2" fill="#232323" stroke="#c8c8c8" stroke-width="1.4"/></svg>
<div style="position:absolute;left:787px;top:860px;width:1px;height:182px;background:#5a84c4;"></div>
<svg style="position:absolute;left:781px;top:862px;" width="13" height="18" viewBox="0 0 13 18"><path d="M0.5 2 A2 2 0 0 1 2.5 0 H10.5 A2 2 0 0 1 12.5 2 V9 L6.5 17 L0.5 9Z" fill="#4a8fe6"/></svg>
<div style="position:absolute;left:223px;top:37px;width:43px;height:45px;background:transparent;border:5px solid #e8452b;"></div>
<svg style="position:absolute;left:0px;top:0px;pointer-events:none;" width="2000" height="1042" viewBox="0 0 2000 1042"><path d="M263.3 57.3 C514.5 124.8 797.5 205.6 823 331" stroke="#e8452b" stroke-width="4.6" fill="none"/><path d="M810.5 331.5 L836.8 329.5 L825.3 355Z" fill="#e8452b"/></svg>
</div></body></html>
